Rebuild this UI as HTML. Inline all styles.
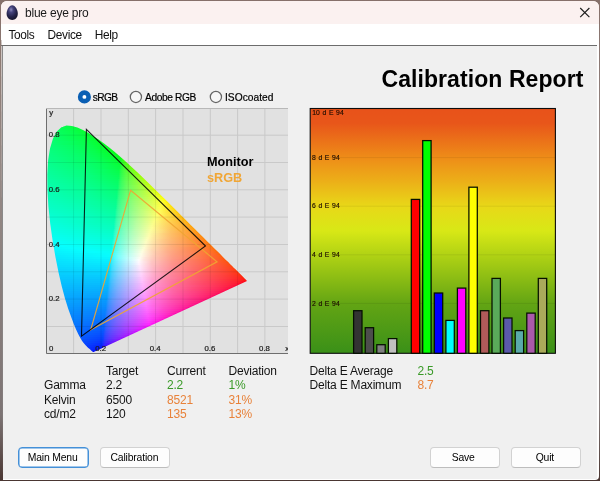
<!DOCTYPE html>
<html><head><meta charset="utf-8"><title>blue eye pro</title>
<style>
html,body{margin:0;padding:0;}
body{width:600px;height:481px;overflow:hidden;background:linear-gradient(180deg,#86706a 0%,#948683 30%,#857b7a 85%,#4a3632 100%);font-family:"Liberation Sans",sans-serif;position:relative;}
#win{position:absolute;left:1.3px;top:1.2px;width:597.5px;height:478.6px;background:#fff;border-radius:6px 6px 4px 2px;overflow:hidden;}
#title{position:absolute;left:0;top:0;width:100%;height:22.8px;background:#fbf1f0;}
#title .t{position:absolute;left:23.9px;top:5px;font-size:12px;letter-spacing:-0.22px;color:#1a1a1a;white-space:nowrap;}
#menu span{position:absolute;top:26.9px;font-size:11.9px;letter-spacing:-0.35px;color:#111;white-space:nowrap;}
#sep{position:absolute;left:0;top:43.4px;width:595.8px;height:1.6px;background:#6c6c6c;}
#client{position:absolute;left:0.6px;top:45px;width:595.6px;height:433px;background:#f0f0f0;border-left:1px solid #8a8a8a;box-sizing:border-box;}
.abs{position:absolute;white-space:nowrap;}
#txt{position:absolute;left:0;top:0;width:600px;height:481px;will-change:transform;}
#h1{right:16.5px;top:65.5px;font-size:23px;letter-spacing:0.08px;font-weight:bold;color:#000;line-height:26px;}
.rl{font-size:10.2px;color:#000;top:92.1px;line-height:12px;-webkit-text-stroke:0.2px #000;}
.tb{font-size:12px;letter-spacing:-0.2px;margin-left:-0.5px;color:#141414;line-height:14px;}
.gr{color:#3a9a28;}
.or{color:#e8823a;}
.btn{appearance:none;-webkit-appearance:none;margin:0;padding:0;font-family:inherit;display:block;position:absolute;top:447px;height:18.5px;border:1px solid #d2d2d2;border-bottom-color:#bdbdbd;border-radius:4px;background:#fdfdfd;font-size:10.4px;letter-spacing:-0.18px;color:#000;text-align:center;line-height:20px;box-sizing:content-box;text-indent:-1.2px;}
svg{position:absolute;left:0;top:0;will-change:transform;}
#title .t,#menu{will-change:transform;}
#title .t{width:200px;height:16px;}
#menu{position:absolute;left:0;top:0;width:300px;height:44px;}
svg text{font-family:"Liberation Sans",sans-serif;}
</style></head><body>
<div id="win">
<div id="title"><div class="t">blue eye pro</div></div>
<div id="menu"><span style="left:7.4px">Tools</span><span style="left:46.6px">Device</span><span style="left:93.7px">Help</span></div>
<div id="sep"></div>
<div id="client"></div>
</div>
<svg width="600" height="481" viewBox="0 0 600 481">
<defs>
<radialGradient id="egg" cx="0.4" cy="0.3" r="0.8"><stop offset="0" stop-color="#8e8cbc"/><stop offset="0.25" stop-color="#45437c"/><stop offset="0.6" stop-color="#25234a"/><stop offset="1" stop-color="#100f20"/></radialGradient>
<linearGradient id="bg" x1="0" x2="0" y1="0" y2="1">
<stop offset="0" stop-color="#e8521a"/><stop offset="0.06" stop-color="#e8561a"/><stop offset="0.2" stop-color="#ee8c18"/><stop offset="0.3" stop-color="#ecb018"/><stop offset="0.4" stop-color="#e8d818"/><stop offset="0.5" stop-color="#d8e816"/><stop offset="0.6" stop-color="#b0d214"/><stop offset="0.8" stop-color="#62a414"/><stop offset="1" stop-color="#3a9018"/>
</linearGradient>
<linearGradient id="wl" x1="0" x2="0" y1="0" y2="1"><stop offset="0" stop-color="#8c7870"/><stop offset="0.3" stop-color="#968a86"/><stop offset="0.85" stop-color="#7d7474"/><stop offset="1" stop-color="#4a3632"/></linearGradient>
<clipPath id="pc"><rect x="46" y="108" width="242" height="246"/></clipPath>
<clipPath id="lc"><path d="M93.6,352.1 L93.4,352.1 L93.0,352.0 L92.4,351.5 L91.1,350.4 L90.7,350.1 L90.2,349.6 L89.7,349.1 L89.0,348.6 L88.3,347.9 L87.5,347.2 L86.6,346.3 L85.6,345.3 L84.5,344.1 L83.2,342.5 L81.8,340.4 L80.1,337.6 L78.2,334.1 L76.2,329.7 L73.8,324.1 L71.2,317.1 L68.2,308.7 L65.0,298.5 L61.8,286.6 L58.6,272.8 L55.5,257.3 L52.6,240.6 L50.2,223.4 L48.4,206.3 L47.4,189.8 L47.3,174.4 L48.1,160.5 L50.0,148.4 L53.0,138.6 L56.8,131.5 L61.4,127.2 L66.5,125.5 L71.9,125.9 L77.4,127.6 L83.0,130.1 L88.5,133.1 L93.8,136.4 L98.9,139.8 L104.0,143.4 L108.9,147.2 L113.9,151.3 L118.8,155.4 L123.7,159.8 L128.6,164.2 L133.5,168.7 L138.4,173.3 L143.3,178.0 L148.2,182.7 L153.0,187.5 L157.9,192.3 L162.7,197.0 L167.6,201.8 L172.3,206.5 L177.1,211.2 L181.7,215.9 L186.3,220.4 L190.7,224.9 L195.1,229.2 L199.3,233.4 L203.4,237.5 L207.3,241.4 L211.0,245.0 L214.4,248.4 L217.6,251.6 L220.6,254.6 L223.4,257.4 L225.9,259.9 L228.2,262.1 L230.2,264.2 L232.1,266.0 L233.7,267.7 L235.2,269.1 L239.7,273.6 L242.7,276.6 L244.6,278.5 L245.7,279.6 L246.3,280.2 L246.6,280.5 L246.8,280.7 L247.0,280.9Z"/></clipPath>
<linearGradient id="g0" gradientUnits="userSpaceOnUse" x1="63" x2="75" y1="0" y2="0"><stop offset="0.000" stop-color="#00ff4b"/><stop offset="1.000" stop-color="#00ff38"/></linearGradient><linearGradient id="g1" gradientUnits="userSpaceOnUse" x1="58" x2="81" y1="0" y2="0"><stop offset="0.000" stop-color="#00ff55"/><stop offset="1.000" stop-color="#00ff30"/></linearGradient><linearGradient id="g2" gradientUnits="userSpaceOnUse" x1="56" x2="85" y1="0" y2="0"><stop offset="0.000" stop-color="#00ff5a"/><stop offset="0.586" stop-color="#00ff44"/><stop offset="1.000" stop-color="#00ff2c"/></linearGradient><linearGradient id="g3" gradientUnits="userSpaceOnUse" x1="54" x2="89" y1="0" y2="0"><stop offset="0.000" stop-color="#00ff5f"/><stop offset="0.571" stop-color="#00ff46"/><stop offset="1.000" stop-color="#00ff26"/></linearGradient><linearGradient id="g4" gradientUnits="userSpaceOnUse" x1="53" x2="92" y1="0" y2="0"><stop offset="0.000" stop-color="#00ff63"/><stop offset="0.615" stop-color="#00ff45"/><stop offset="1.000" stop-color="#00ff23"/></linearGradient><linearGradient id="g5" gradientUnits="userSpaceOnUse" x1="52" x2="96" y1="0" y2="0"><stop offset="0.000" stop-color="#00ff67"/><stop offset="0.659" stop-color="#00ff42"/><stop offset="0.886" stop-color="#00ff2d"/><stop offset="1.000" stop-color="#00ff1c"/></linearGradient><linearGradient id="g6" gradientUnits="userSpaceOnUse" x1="51" x2="99" y1="0" y2="0"><stop offset="0.000" stop-color="#00ff6a"/><stop offset="0.688" stop-color="#00ff41"/><stop offset="0.854" stop-color="#00ff30"/><stop offset="1.000" stop-color="#00ff18"/></linearGradient><linearGradient id="g7" gradientUnits="userSpaceOnUse" x1="50" x2="102" y1="0" y2="0"><stop offset="0.000" stop-color="#00ff6e"/><stop offset="0.654" stop-color="#00ff45"/><stop offset="0.865" stop-color="#00ff2e"/><stop offset="1.000" stop-color="#00ff13"/></linearGradient><linearGradient id="g8" gradientUnits="userSpaceOnUse" x1="49" x2="104" y1="0" y2="0"><stop offset="0.000" stop-color="#00ff71"/><stop offset="0.382" stop-color="#00ff5c"/><stop offset="0.709" stop-color="#00ff42"/><stop offset="0.855" stop-color="#00ff31"/><stop offset="1.000" stop-color="#00ff13"/></linearGradient><linearGradient id="g9" gradientUnits="userSpaceOnUse" x1="49" x2="107" y1="0" y2="0"><stop offset="0.000" stop-color="#00ff74"/><stop offset="0.672" stop-color="#00ff46"/><stop offset="0.897" stop-color="#00ff29"/><stop offset="1.000" stop-color="#00ff0b"/></linearGradient><linearGradient id="g10" gradientUnits="userSpaceOnUse" x1="48" x2="110" y1="0" y2="0"><stop offset="0.000" stop-color="#00ff77"/><stop offset="0.371" stop-color="#00ff61"/><stop offset="0.710" stop-color="#00ff43"/><stop offset="0.903" stop-color="#00ff26"/><stop offset="0.968" stop-color="#00ff14"/><stop offset="1.000" stop-color="#00ff00"/></linearGradient><linearGradient id="g11" gradientUnits="userSpaceOnUse" x1="48" x2="112" y1="0" y2="0"><stop offset="0.000" stop-color="#00ff7a"/><stop offset="0.359" stop-color="#00ff64"/><stop offset="0.688" stop-color="#00ff47"/><stop offset="0.922" stop-color="#00ff23"/><stop offset="0.969" stop-color="#00ff14"/><stop offset="1.000" stop-color="#00ff00"/></linearGradient><linearGradient id="g12" gradientUnits="userSpaceOnUse" x1="47" x2="115" y1="0" y2="0"><stop offset="0.000" stop-color="#00ff7d"/><stop offset="0.353" stop-color="#00ff67"/><stop offset="0.706" stop-color="#00ff46"/><stop offset="0.897" stop-color="#00ff27"/><stop offset="0.956" stop-color="#00ff15"/><stop offset="0.985" stop-color="#00ff00"/><stop offset="1.000" stop-color="#00ff00"/></linearGradient><linearGradient id="g13" gradientUnits="userSpaceOnUse" x1="47" x2="117" y1="0" y2="0"><stop offset="0.000" stop-color="#00ff7f"/><stop offset="0.314" stop-color="#00ff6c"/><stop offset="0.686" stop-color="#00ff4a"/><stop offset="0.900" stop-color="#00ff27"/><stop offset="0.957" stop-color="#00ff15"/><stop offset="0.986" stop-color="#00ff00"/><stop offset="1.000" stop-color="#00ff00"/></linearGradient><linearGradient id="g14" gradientUnits="userSpaceOnUse" x1="47" x2="120" y1="0" y2="0"><stop offset="0.000" stop-color="#00ff82"/><stop offset="0.425" stop-color="#00ff65"/><stop offset="0.699" stop-color="#00ff49"/><stop offset="0.877" stop-color="#00ff2b"/><stop offset="0.945" stop-color="#00ff15"/><stop offset="0.973" stop-color="#00ff00"/><stop offset="1.000" stop-color="#00ff00"/></linearGradient><linearGradient id="g15" gradientUnits="userSpaceOnUse" x1="46" x2="122" y1="0" y2="0"><stop offset="0.000" stop-color="#00ff85"/><stop offset="0.434" stop-color="#00ff67"/><stop offset="0.684" stop-color="#00ff4d"/><stop offset="0.895" stop-color="#00ff28"/><stop offset="0.947" stop-color="#00ff16"/><stop offset="0.974" stop-color="#00ff00"/><stop offset="0.987" stop-color="#00ff00"/><stop offset="1.000" stop-color="#1cff00"/></linearGradient><linearGradient id="g16" gradientUnits="userSpaceOnUse" x1="46" x2="124" y1="0" y2="0"><stop offset="0.000" stop-color="#00ff88"/><stop offset="0.436" stop-color="#00ff69"/><stop offset="0.667" stop-color="#00ff51"/><stop offset="0.859" stop-color="#00ff32"/><stop offset="0.949" stop-color="#00ff16"/><stop offset="0.962" stop-color="#06ff0e"/><stop offset="0.974" stop-color="#1fff00"/><stop offset="1.000" stop-color="#35ff00"/></linearGradient><linearGradient id="g17" gradientUnits="userSpaceOnUse" x1="46" x2="127" y1="0" y2="0"><stop offset="0.000" stop-color="#00ff8a"/><stop offset="0.580" stop-color="#00ff5c"/><stop offset="0.790" stop-color="#00ff3f"/><stop offset="0.914" stop-color="#00ff21"/><stop offset="0.951" stop-color="#2eff0f"/><stop offset="0.963" stop-color="#37ff00"/><stop offset="1.000" stop-color="#4dff00"/></linearGradient><linearGradient id="g18" gradientUnits="userSpaceOnUse" x1="46" x2="129" y1="0" y2="0"><stop offset="0.000" stop-color="#00ff8d"/><stop offset="0.614" stop-color="#00ff5a"/><stop offset="0.819" stop-color="#00ff3b"/><stop offset="0.892" stop-color="#00ff29"/><stop offset="0.916" stop-color="#25ff22"/><stop offset="0.928" stop-color="#30ff1d"/><stop offset="0.952" stop-color="#41ff0f"/><stop offset="0.964" stop-color="#48ff00"/><stop offset="1.000" stop-color="#5aff00"/></linearGradient><linearGradient id="g19" gradientUnits="userSpaceOnUse" x1="45" x2="131" y1="0" y2="0"><stop offset="0.000" stop-color="#00ff90"/><stop offset="0.558" stop-color="#00ff63"/><stop offset="0.721" stop-color="#00ff4e"/><stop offset="0.872" stop-color="#00ff30"/><stop offset="0.884" stop-color="#18ff2d"/><stop offset="0.907" stop-color="#32ff26"/><stop offset="0.942" stop-color="#49ff18"/><stop offset="0.965" stop-color="#56ff00"/><stop offset="1.000" stop-color="#66ff00"/></linearGradient><linearGradient id="g20" gradientUnits="userSpaceOnUse" x1="45" x2="133" y1="0" y2="0"><stop offset="0.000" stop-color="#00ff92"/><stop offset="0.511" stop-color="#00ff6a"/><stop offset="0.705" stop-color="#00ff52"/><stop offset="0.852" stop-color="#00ff37"/><stop offset="0.864" stop-color="#1cff34"/><stop offset="0.898" stop-color="#3dff2a"/><stop offset="0.943" stop-color="#57ff18"/><stop offset="0.966" stop-color="#62ff00"/><stop offset="1.000" stop-color="#71ff00"/></linearGradient><linearGradient id="g21" gradientUnits="userSpaceOnUse" x1="45" x2="135" y1="0" y2="0"><stop offset="0.000" stop-color="#00ff95"/><stop offset="0.511" stop-color="#00ff6c"/><stop offset="0.822" stop-color="#00ff3f"/><stop offset="0.833" stop-color="#05ff3c"/><stop offset="0.844" stop-color="#1fff3a"/><stop offset="0.878" stop-color="#3fff31"/><stop offset="0.944" stop-color="#64ff18"/><stop offset="0.956" stop-color="#69ff11"/><stop offset="0.967" stop-color="#6eff00"/><stop offset="1.000" stop-color="#7bff00"/></linearGradient><linearGradient id="g22" gradientUnits="userSpaceOnUse" x1="45" x2="137" y1="0" y2="0"><stop offset="0.000" stop-color="#00ff97"/><stop offset="0.435" stop-color="#00ff76"/><stop offset="0.630" stop-color="#00ff60"/><stop offset="0.804" stop-color="#00ff44"/><stop offset="0.826" stop-color="#23ff3f"/><stop offset="0.859" stop-color="#41ff38"/><stop offset="0.935" stop-color="#6aff1f"/><stop offset="0.957" stop-color="#74ff11"/><stop offset="0.967" stop-color="#78ff00"/><stop offset="1.000" stop-color="#85ff00"/></linearGradient><linearGradient id="g23" gradientUnits="userSpaceOnUse" x1="45" x2="139" y1="0" y2="0"><stop offset="0.000" stop-color="#00ff9a"/><stop offset="0.436" stop-color="#00ff78"/><stop offset="0.787" stop-color="#00ff49"/><stop offset="0.809" stop-color="#25ff45"/><stop offset="0.851" stop-color="#4aff3b"/><stop offset="0.936" stop-color="#75ff1f"/><stop offset="0.957" stop-color="#7eff12"/><stop offset="0.968" stop-color="#82ff00"/><stop offset="1.000" stop-color="#8eff00"/></linearGradient><linearGradient id="g24" gradientUnits="userSpaceOnUse" x1="45" x2="142" y1="0" y2="0"><stop offset="0.000" stop-color="#00ff9c"/><stop offset="0.443" stop-color="#00ff79"/><stop offset="0.763" stop-color="#00ff4d"/><stop offset="0.773" stop-color="#19ff4c"/><stop offset="0.784" stop-color="#28ff4a"/><stop offset="0.835" stop-color="#52ff3e"/><stop offset="0.928" stop-color="#80ff20"/><stop offset="0.948" stop-color="#88ff12"/><stop offset="0.959" stop-color="#8cff03"/><stop offset="1.000" stop-color="#9bff00"/></linearGradient><linearGradient id="g25" gradientUnits="userSpaceOnUse" x1="45" x2="144" y1="0" y2="0"><stop offset="0.000" stop-color="#00ff9f"/><stop offset="0.465" stop-color="#00ff79"/><stop offset="0.747" stop-color="#00ff52"/><stop offset="0.758" stop-color="#1dff50"/><stop offset="0.768" stop-color="#2bff4e"/><stop offset="0.818" stop-color="#54ff44"/><stop offset="0.919" stop-color="#86ff25"/><stop offset="0.949" stop-color="#92ff13"/><stop offset="0.960" stop-color="#95ff04"/><stop offset="0.970" stop-color="#99ff00"/><stop offset="1.000" stop-color="#a4ff00"/></linearGradient><linearGradient id="g26" gradientUnits="userSpaceOnUse" x1="45" x2="146" y1="0" y2="0"><stop offset="0.000" stop-color="#00ffa1"/><stop offset="0.356" stop-color="#00ff86"/><stop offset="0.723" stop-color="#00ff58"/><stop offset="0.733" stop-color="#03ff56"/><stop offset="0.743" stop-color="#20ff55"/><stop offset="0.762" stop-color="#38ff51"/><stop offset="0.802" stop-color="#56ff49"/><stop offset="0.911" stop-color="#8bff2a"/><stop offset="0.941" stop-color="#97ff1b"/><stop offset="0.970" stop-color="#a2ff00"/><stop offset="1.000" stop-color="#adff00"/></linearGradient><linearGradient id="g27" gradientUnits="userSpaceOnUse" x1="45" x2="148" y1="0" y2="0"><stop offset="0.000" stop-color="#00ffa4"/><stop offset="0.359" stop-color="#00ff88"/><stop offset="0.709" stop-color="#00ff5c"/><stop offset="0.738" stop-color="#30ff57"/><stop offset="0.777" stop-color="#51ff50"/><stop offset="0.893" stop-color="#8dff32"/><stop offset="0.942" stop-color="#a0ff1b"/><stop offset="0.971" stop-color="#abff00"/><stop offset="1.000" stop-color="#b6ff00"/></linearGradient><linearGradient id="g28" gradientUnits="userSpaceOnUse" x1="45" x2="150" y1="0" y2="0"><stop offset="0.000" stop-color="#00ffa6"/><stop offset="0.352" stop-color="#00ff8b"/><stop offset="0.695" stop-color="#00ff61"/><stop offset="0.714" stop-color="#26ff5d"/><stop offset="0.724" stop-color="#32ff5c"/><stop offset="0.752" stop-color="#4cff56"/><stop offset="0.790" stop-color="#65ff4f"/><stop offset="0.905" stop-color="#9bff2f"/><stop offset="0.943" stop-color="#aaff1c"/><stop offset="0.971" stop-color="#b4ff00"/><stop offset="1.000" stop-color="#beff00"/></linearGradient><linearGradient id="g29" gradientUnits="userSpaceOnUse" x1="45" x2="152" y1="0" y2="0"><stop offset="0.000" stop-color="#00ffa9"/><stop offset="0.346" stop-color="#00ff8e"/><stop offset="0.682" stop-color="#00ff65"/><stop offset="0.692" stop-color="#19ff63"/><stop offset="0.710" stop-color="#35ff60"/><stop offset="0.766" stop-color="#61ff55"/><stop offset="0.897" stop-color="#a0ff33"/><stop offset="0.944" stop-color="#b2ff1c"/><stop offset="0.972" stop-color="#bdff00"/><stop offset="1.000" stop-color="#c7ff00"/></linearGradient><linearGradient id="g30" gradientUnits="userSpaceOnUse" x1="45" x2="154" y1="0" y2="0"><stop offset="0.000" stop-color="#00ffab"/><stop offset="0.339" stop-color="#00ff91"/><stop offset="0.670" stop-color="#00ff69"/><stop offset="0.679" stop-color="#1dff67"/><stop offset="0.688" stop-color="#2cff66"/><stop offset="0.743" stop-color="#5dff5c"/><stop offset="0.807" stop-color="#81ff4e"/><stop offset="0.899" stop-color="#aaff34"/><stop offset="0.945" stop-color="#bbff1d"/><stop offset="0.972" stop-color="#c6ff00"/><stop offset="1.000" stop-color="#cfff00"/></linearGradient><linearGradient id="g31" gradientUnits="userSpaceOnUse" x1="45" x2="156" y1="0" y2="0"><stop offset="0.000" stop-color="#00ffae"/><stop offset="0.414" stop-color="#00ff8c"/><stop offset="0.658" stop-color="#00ff6d"/><stop offset="0.667" stop-color="#21ff6b"/><stop offset="0.676" stop-color="#2fff6a"/><stop offset="0.703" stop-color="#4aff65"/><stop offset="0.748" stop-color="#6aff5d"/><stop offset="0.892" stop-color="#afff38"/><stop offset="0.946" stop-color="#c4ff1e"/><stop offset="0.973" stop-color="#ceff00"/><stop offset="1.000" stop-color="#d8ff00"/></linearGradient><linearGradient id="g32" gradientUnits="userSpaceOnUse" x1="45" x2="158" y1="0" y2="0"><stop offset="0.000" stop-color="#00ffb0"/><stop offset="0.389" stop-color="#00ff91"/><stop offset="0.637" stop-color="#00ff72"/><stop offset="0.655" stop-color="#24ff6f"/><stop offset="0.673" stop-color="#3cff6c"/><stop offset="0.735" stop-color="#6cff61"/><stop offset="0.885" stop-color="#b5ff3c"/><stop offset="0.938" stop-color="#caff24"/><stop offset="0.956" stop-color="#d0ff17"/><stop offset="0.973" stop-color="#d7ff00"/><stop offset="1.000" stop-color="#e1ff00"/></linearGradient><linearGradient id="g33" gradientUnits="userSpaceOnUse" x1="45" x2="160" y1="0" y2="0"><stop offset="0.000" stop-color="#00ffb3"/><stop offset="0.374" stop-color="#00ff95"/><stop offset="0.626" stop-color="#00ff76"/><stop offset="0.643" stop-color="#27ff73"/><stop offset="0.661" stop-color="#3eff70"/><stop offset="0.730" stop-color="#73ff64"/><stop offset="0.826" stop-color="#a4ff4f"/><stop offset="0.904" stop-color="#c5ff36"/><stop offset="0.948" stop-color="#d6ff1f"/><stop offset="0.974" stop-color="#e0ff00"/><stop offset="1.000" stop-color="#e9ff00"/></linearGradient><linearGradient id="g34" gradientUnits="userSpaceOnUse" x1="45" x2="162" y1="0" y2="0"><stop offset="0.000" stop-color="#00ffb6"/><stop offset="0.359" stop-color="#00ff99"/><stop offset="0.615" stop-color="#00ff7a"/><stop offset="0.624" stop-color="#1aff78"/><stop offset="0.641" stop-color="#36ff76"/><stop offset="0.701" stop-color="#6aff6c"/><stop offset="0.795" stop-color="#9eff58"/><stop offset="0.897" stop-color="#caff3a"/><stop offset="0.949" stop-color="#dfff1f"/><stop offset="0.974" stop-color="#e8ff00"/><stop offset="1.000" stop-color="#f2ff00"/></linearGradient><linearGradient id="g35" gradientUnits="userSpaceOnUse" x1="45" x2="164" y1="0" y2="0"><stop offset="0.000" stop-color="#00ffb8"/><stop offset="0.353" stop-color="#00ff9c"/><stop offset="0.605" stop-color="#00ff7d"/><stop offset="0.613" stop-color="#1eff7c"/><stop offset="0.630" stop-color="#39ff7a"/><stop offset="0.697" stop-color="#71ff6e"/><stop offset="0.782" stop-color="#a0ff5d"/><stop offset="0.899" stop-color="#d4ff3b"/><stop offset="0.950" stop-color="#e8ff20"/><stop offset="0.975" stop-color="#f1ff00"/><stop offset="1.000" stop-color="#fbff00"/></linearGradient><linearGradient id="g36" gradientUnits="userSpaceOnUse" x1="45" x2="166" y1="0" y2="0"><stop offset="0.000" stop-color="#00ffbb"/><stop offset="0.339" stop-color="#00ffa0"/><stop offset="0.595" stop-color="#00ff81"/><stop offset="0.603" stop-color="#22ff80"/><stop offset="0.620" stop-color="#3bff7d"/><stop offset="0.686" stop-color="#73ff72"/><stop offset="0.769" stop-color="#a2ff62"/><stop offset="0.868" stop-color="#cfff48"/><stop offset="0.950" stop-color="#f1ff21"/><stop offset="0.975" stop-color="#faff00"/><stop offset="1.000" stop-color="#fffa00"/></linearGradient><linearGradient id="g37" gradientUnits="userSpaceOnUse" x1="46" x2="168" y1="0" y2="0"><stop offset="0.000" stop-color="#00ffbd"/><stop offset="0.320" stop-color="#00ffa4"/><stop offset="0.574" stop-color="#00ff86"/><stop offset="0.582" stop-color="#0eff85"/><stop offset="0.590" stop-color="#25ff84"/><stop offset="0.615" stop-color="#47ff80"/><stop offset="0.672" stop-color="#75ff77"/><stop offset="0.713" stop-color="#8eff6f"/><stop offset="0.803" stop-color="#bbff5c"/><stop offset="0.893" stop-color="#e2ff40"/><stop offset="0.951" stop-color="#faff21"/><stop offset="0.975" stop-color="#fffb00"/><stop offset="1.000" stop-color="#fff200"/></linearGradient><linearGradient id="g38" gradientUnits="userSpaceOnUse" x1="46" x2="170" y1="0" y2="0"><stop offset="0.000" stop-color="#00ffc0"/><stop offset="0.347" stop-color="#00ffa4"/><stop offset="0.565" stop-color="#00ff8a"/><stop offset="0.581" stop-color="#29ff88"/><stop offset="0.605" stop-color="#49ff84"/><stop offset="0.661" stop-color="#77ff7b"/><stop offset="0.702" stop-color="#90ff74"/><stop offset="0.815" stop-color="#c9ff5b"/><stop offset="0.895" stop-color="#ecff41"/><stop offset="0.944" stop-color="#fffe28"/><stop offset="0.960" stop-color="#fff81a"/><stop offset="0.976" stop-color="#fff200"/><stop offset="1.000" stop-color="#ffea00"/></linearGradient><linearGradient id="g39" gradientUnits="userSpaceOnUse" x1="46" x2="172" y1="0" y2="0"><stop offset="0.000" stop-color="#00ffc2"/><stop offset="0.270" stop-color="#00ffae"/><stop offset="0.556" stop-color="#00ff8e"/><stop offset="0.571" stop-color="#2cff8b"/><stop offset="0.595" stop-color="#4bff88"/><stop offset="0.651" stop-color="#79ff7f"/><stop offset="0.690" stop-color="#92ff78"/><stop offset="0.825" stop-color="#d6ff5a"/><stop offset="0.921" stop-color="#ffff37"/><stop offset="0.960" stop-color="#fff01a"/><stop offset="0.976" stop-color="#ffea00"/><stop offset="1.000" stop-color="#ffe200"/></linearGradient><linearGradient id="g40" gradientUnits="userSpaceOnUse" x1="46" x2="174" y1="0" y2="0"><stop offset="0.000" stop-color="#00ffc5"/><stop offset="0.289" stop-color="#00ffaf"/><stop offset="0.547" stop-color="#00ff91"/><stop offset="0.555" stop-color="#1fff90"/><stop offset="0.562" stop-color="#2fff8f"/><stop offset="0.586" stop-color="#4dff8c"/><stop offset="0.641" stop-color="#7bff83"/><stop offset="0.695" stop-color="#9dff79"/><stop offset="0.828" stop-color="#dfff5b"/><stop offset="0.898" stop-color="#feff42"/><stop offset="0.953" stop-color="#ffea20"/><stop offset="0.969" stop-color="#ffe510"/><stop offset="0.977" stop-color="#ffe200"/><stop offset="1.000" stop-color="#ffdb00"/></linearGradient><linearGradient id="g41" gradientUnits="userSpaceOnUse" x1="46" x2="176" y1="0" y2="0"><stop offset="0.000" stop-color="#00ffc8"/><stop offset="0.308" stop-color="#00ffb0"/><stop offset="0.538" stop-color="#00ff95"/><stop offset="0.546" stop-color="#23ff94"/><stop offset="0.569" stop-color="#47ff91"/><stop offset="0.623" stop-color="#77ff89"/><stop offset="0.700" stop-color="#a8ff7b"/><stop offset="0.877" stop-color="#feff4d"/><stop offset="0.946" stop-color="#ffe526"/><stop offset="0.969" stop-color="#ffdd10"/><stop offset="0.977" stop-color="#ffdb00"/><stop offset="1.000" stop-color="#ffd400"/></linearGradient><linearGradient id="g42" gradientUnits="userSpaceOnUse" x1="46" x2="178" y1="0" y2="0"><stop offset="0.000" stop-color="#00ffcb"/><stop offset="0.295" stop-color="#00ffb4"/><stop offset="0.523" stop-color="#00ff9a"/><stop offset="0.545" stop-color="#34ff97"/><stop offset="0.576" stop-color="#59ff93"/><stop offset="0.621" stop-color="#7fff8b"/><stop offset="0.727" stop-color="#bfff78"/><stop offset="0.864" stop-color="#fffd53"/><stop offset="0.955" stop-color="#ffdb20"/><stop offset="0.970" stop-color="#ffd610"/><stop offset="0.977" stop-color="#ffd400"/><stop offset="1.000" stop-color="#ffcd00"/></linearGradient><linearGradient id="g43" gradientUnits="userSpaceOnUse" x1="47" x2="180" y1="0" y2="0"><stop offset="0.000" stop-color="#00ffcd"/><stop offset="0.278" stop-color="#00ffb8"/><stop offset="0.511" stop-color="#00ff9e"/><stop offset="0.526" stop-color="#2aff9c"/><stop offset="0.534" stop-color="#37ff9b"/><stop offset="0.579" stop-color="#69ff94"/><stop offset="0.647" stop-color="#9aff89"/><stop offset="0.744" stop-color="#d1ff76"/><stop offset="0.842" stop-color="#fffe5c"/><stop offset="0.947" stop-color="#ffd625"/><stop offset="0.970" stop-color="#ffcf10"/><stop offset="0.977" stop-color="#ffcd00"/><stop offset="1.000" stop-color="#ffc700"/></linearGradient><linearGradient id="g44" gradientUnits="userSpaceOnUse" x1="47" x2="182" y1="0" y2="0"><stop offset="0.000" stop-color="#00ffd0"/><stop offset="0.267" stop-color="#00ffbc"/><stop offset="0.504" stop-color="#00ffa2"/><stop offset="0.511" stop-color="#1bffa1"/><stop offset="0.526" stop-color="#3aff9f"/><stop offset="0.570" stop-color="#6bff98"/><stop offset="0.644" stop-color="#a1ff8c"/><stop offset="0.756" stop-color="#dfff76"/><stop offset="0.822" stop-color="#ffff64"/><stop offset="0.933" stop-color="#ffd42e"/><stop offset="0.963" stop-color="#ffcb19"/><stop offset="0.978" stop-color="#ffc700"/><stop offset="1.000" stop-color="#ffc100"/></linearGradient><linearGradient id="g45" gradientUnits="userSpaceOnUse" x1="47" x2="184" y1="0" y2="0"><stop offset="0.000" stop-color="#00ffd3"/><stop offset="0.255" stop-color="#00ffc0"/><stop offset="0.496" stop-color="#00ffa6"/><stop offset="0.504" stop-color="#20ffa5"/><stop offset="0.518" stop-color="#3dffa3"/><stop offset="0.555" stop-color="#67ff9d"/><stop offset="0.635" stop-color="#a3ff91"/><stop offset="0.766" stop-color="#edff76"/><stop offset="0.803" stop-color="#ffff6c"/><stop offset="0.934" stop-color="#ffcd2d"/><stop offset="0.964" stop-color="#ffc418"/><stop offset="0.978" stop-color="#ffc000"/><stop offset="1.000" stop-color="#ffbb00"/></linearGradient><linearGradient id="g46" gradientUnits="userSpaceOnUse" x1="47" x2="186" y1="0" y2="0"><stop offset="0.000" stop-color="#00ffd6"/><stop offset="0.245" stop-color="#00ffc4"/><stop offset="0.489" stop-color="#00ffa9"/><stop offset="0.496" stop-color="#24ffa8"/><stop offset="0.511" stop-color="#3fffa7"/><stop offset="0.561" stop-color="#76ff9f"/><stop offset="0.662" stop-color="#bcff8f"/><stop offset="0.777" stop-color="#fbff76"/><stop offset="0.942" stop-color="#ffc428"/><stop offset="0.964" stop-color="#ffbe18"/><stop offset="0.978" stop-color="#ffba00"/><stop offset="1.000" stop-color="#ffb500"/></linearGradient><linearGradient id="g47" gradientUnits="userSpaceOnUse" x1="47" x2="188" y1="0" y2="0"><stop offset="0.000" stop-color="#00ffd9"/><stop offset="0.255" stop-color="#00ffc6"/><stop offset="0.475" stop-color="#00ffae"/><stop offset="0.482" stop-color="#0effad"/><stop offset="0.489" stop-color="#28ffac"/><stop offset="0.504" stop-color="#42ffab"/><stop offset="0.553" stop-color="#78ffa4"/><stop offset="0.645" stop-color="#baff95"/><stop offset="0.766" stop-color="#feff7b"/><stop offset="0.844" stop-color="#ffdd57"/><stop offset="0.936" stop-color="#ffc02c"/><stop offset="0.965" stop-color="#ffb818"/><stop offset="0.979" stop-color="#ffb400"/><stop offset="1.000" stop-color="#ffaf00"/></linearGradient><linearGradient id="g48" gradientUnits="userSpaceOnUse" x1="48" x2="190" y1="0" y2="0"><stop offset="0.000" stop-color="#00ffdc"/><stop offset="0.465" stop-color="#00ffb2"/><stop offset="0.479" stop-color="#2bffb0"/><stop offset="0.486" stop-color="#39ffb0"/><stop offset="0.507" stop-color="#57ffad"/><stop offset="0.535" stop-color="#74ffa9"/><stop offset="0.613" stop-color="#afff9d"/><stop offset="0.746" stop-color="#fdff82"/><stop offset="0.838" stop-color="#ffd859"/><stop offset="0.930" stop-color="#ffbb2f"/><stop offset="0.965" stop-color="#ffb218"/><stop offset="0.972" stop-color="#ffb011"/><stop offset="0.979" stop-color="#ffaf00"/><stop offset="1.000" stop-color="#ffaa00"/></linearGradient><linearGradient id="g49" gradientUnits="userSpaceOnUse" x1="48" x2="192" y1="0" y2="0"><stop offset="0.000" stop-color="#00ffdf"/><stop offset="0.458" stop-color="#00ffb6"/><stop offset="0.465" stop-color="#1cffb5"/><stop offset="0.479" stop-color="#3cffb4"/><stop offset="0.493" stop-color="#51ffb2"/><stop offset="0.528" stop-color="#76ffad"/><stop offset="0.611" stop-color="#b6ffa0"/><stop offset="0.729" stop-color="#fcff89"/><stop offset="0.819" stop-color="#ffd860"/><stop offset="0.924" stop-color="#ffb732"/><stop offset="0.965" stop-color="#ffad18"/><stop offset="0.972" stop-color="#ffab11"/><stop offset="0.979" stop-color="#ffa900"/><stop offset="1.000" stop-color="#ffa500"/></linearGradient><linearGradient id="g50" gradientUnits="userSpaceOnUse" x1="48" x2="194" y1="0" y2="0"><stop offset="0.000" stop-color="#00ffe2"/><stop offset="0.452" stop-color="#00ffba"/><stop offset="0.459" stop-color="#21ffb9"/><stop offset="0.473" stop-color="#3fffb8"/><stop offset="0.514" stop-color="#72ffb2"/><stop offset="0.589" stop-color="#afffa7"/><stop offset="0.712" stop-color="#fcff90"/><stop offset="0.808" stop-color="#ffd564"/><stop offset="0.932" stop-color="#ffaf2e"/><stop offset="0.966" stop-color="#ffa718"/><stop offset="0.979" stop-color="#ffa403"/><stop offset="1.000" stop-color="#ff9f00"/></linearGradient><linearGradient id="g51" gradientUnits="userSpaceOnUse" x1="48" x2="196" y1="0" y2="0"><stop offset="0.000" stop-color="#00ffe5"/><stop offset="0.446" stop-color="#00ffbe"/><stop offset="0.453" stop-color="#25ffbd"/><stop offset="0.466" stop-color="#42ffbc"/><stop offset="0.507" stop-color="#74ffb7"/><stop offset="0.595" stop-color="#bbffa9"/><stop offset="0.703" stop-color="#ffff95"/><stop offset="0.764" stop-color="#ffe077"/><stop offset="0.838" stop-color="#ffc456"/><stop offset="0.946" stop-color="#ffa626"/><stop offset="0.966" stop-color="#ffa218"/><stop offset="0.980" stop-color="#ff9f04"/><stop offset="1.000" stop-color="#ff9a00"/></linearGradient><linearGradient id="g52" gradientUnits="userSpaceOnUse" x1="49" x2="198" y1="0" y2="0"><stop offset="0.000" stop-color="#00ffe8"/><stop offset="0.430" stop-color="#00ffc3"/><stop offset="0.436" stop-color="#0effc2"/><stop offset="0.443" stop-color="#29ffc2"/><stop offset="0.456" stop-color="#44ffc0"/><stop offset="0.503" stop-color="#7dffba"/><stop offset="0.577" stop-color="#b9ffaf"/><stop offset="0.685" stop-color="#feff9c"/><stop offset="0.812" stop-color="#ffc660"/><stop offset="0.926" stop-color="#ffa630"/><stop offset="0.960" stop-color="#ff9e1d"/><stop offset="0.987" stop-color="#ff9800"/><stop offset="1.000" stop-color="#ff9500"/></linearGradient><linearGradient id="g53" gradientUnits="userSpaceOnUse" x1="49" x2="200" y1="0" y2="0"><stop offset="0.000" stop-color="#00ffeb"/><stop offset="0.424" stop-color="#00ffc7"/><stop offset="0.437" stop-color="#2dffc6"/><stop offset="0.444" stop-color="#3bffc5"/><stop offset="0.470" stop-color="#63ffc2"/><stop offset="0.490" stop-color="#79ffbf"/><stop offset="0.556" stop-color="#b2ffb6"/><stop offset="0.669" stop-color="#fdffa2"/><stop offset="0.808" stop-color="#ffc161"/><stop offset="0.934" stop-color="#ff9f2c"/><stop offset="0.967" stop-color="#ff9717"/><stop offset="0.987" stop-color="#ff9300"/><stop offset="1.000" stop-color="#ff9000"/></linearGradient><linearGradient id="g54" gradientUnits="userSpaceOnUse" x1="49" x2="202" y1="0" y2="0"><stop offset="0.000" stop-color="#00ffee"/><stop offset="0.418" stop-color="#00ffcc"/><stop offset="0.425" stop-color="#1cffcb"/><stop offset="0.438" stop-color="#3effc9"/><stop offset="0.471" stop-color="#6dffc5"/><stop offset="0.529" stop-color="#a5ffbd"/><stop offset="0.654" stop-color="#fdffa9"/><stop offset="0.745" stop-color="#ffd27b"/><stop offset="0.810" stop-color="#ffba5f"/><stop offset="0.928" stop-color="#ff9b2f"/><stop offset="0.967" stop-color="#ff9217"/><stop offset="0.987" stop-color="#ff8e00"/><stop offset="1.000" stop-color="#ff8c00"/></linearGradient><linearGradient id="g55" gradientUnits="userSpaceOnUse" x1="49" x2="204" y1="0" y2="0"><stop offset="0.000" stop-color="#00fff2"/><stop offset="0.413" stop-color="#00ffd0"/><stop offset="0.419" stop-color="#22ffcf"/><stop offset="0.426" stop-color="#34ffcf"/><stop offset="0.445" stop-color="#57ffcc"/><stop offset="0.471" stop-color="#77ffc9"/><stop offset="0.529" stop-color="#adffc1"/><stop offset="0.645" stop-color="#fffead"/><stop offset="0.684" stop-color="#ffe797"/><stop offset="0.781" stop-color="#ffbe6a"/><stop offset="0.942" stop-color="#ff9328"/><stop offset="0.968" stop-color="#ff8d17"/><stop offset="0.987" stop-color="#ff8900"/><stop offset="1.000" stop-color="#ff8700"/></linearGradient><linearGradient id="g56" gradientUnits="userSpaceOnUse" x1="50" x2="206" y1="0" y2="0"><stop offset="0.000" stop-color="#00fff5"/><stop offset="0.404" stop-color="#00ffd4"/><stop offset="0.410" stop-color="#26ffd4"/><stop offset="0.417" stop-color="#37ffd3"/><stop offset="0.436" stop-color="#59ffd1"/><stop offset="0.455" stop-color="#72ffce"/><stop offset="0.526" stop-color="#b5ffc5"/><stop offset="0.628" stop-color="#ffffb4"/><stop offset="0.667" stop-color="#ffe79d"/><stop offset="0.776" stop-color="#ffb96b"/><stop offset="0.929" stop-color="#ff902e"/><stop offset="0.968" stop-color="#ff8817"/><stop offset="0.987" stop-color="#ff8500"/><stop offset="1.000" stop-color="#ff8200"/></linearGradient><linearGradient id="g57" gradientUnits="userSpaceOnUse" x1="50" x2="208" y1="0" y2="0"><stop offset="0.000" stop-color="#00fff8"/><stop offset="0.392" stop-color="#00ffda"/><stop offset="0.399" stop-color="#0effd9"/><stop offset="0.405" stop-color="#2bffd8"/><stop offset="0.411" stop-color="#3bffd7"/><stop offset="0.430" stop-color="#5cffd5"/><stop offset="0.456" stop-color="#7cffd2"/><stop offset="0.525" stop-color="#bdffc9"/><stop offset="0.614" stop-color="#ffffbb"/><stop offset="0.677" stop-color="#ffda96"/><stop offset="0.747" stop-color="#ffbd76"/><stop offset="0.911" stop-color="#ff8f36"/><stop offset="0.962" stop-color="#ff851c"/><stop offset="0.987" stop-color="#ff8000"/><stop offset="1.000" stop-color="#ff7e00"/></linearGradient><linearGradient id="g58" gradientUnits="userSpaceOnUse" x1="50" x2="210" y1="0" y2="0"><stop offset="0.000" stop-color="#00fffc"/><stop offset="0.388" stop-color="#00ffde"/><stop offset="0.400" stop-color="#2fffdd"/><stop offset="0.406" stop-color="#3effdc"/><stop offset="0.425" stop-color="#5fffda"/><stop offset="0.444" stop-color="#77ffd8"/><stop offset="0.500" stop-color="#b0ffd1"/><stop offset="0.600" stop-color="#feffc2"/><stop offset="0.662" stop-color="#ffda9c"/><stop offset="0.744" stop-color="#ffb876"/><stop offset="0.931" stop-color="#ff862d"/><stop offset="0.969" stop-color="#ff7f17"/><stop offset="0.988" stop-color="#ff7b00"/><stop offset="1.000" stop-color="#ff7900"/></linearGradient><linearGradient id="g59" gradientUnits="userSpaceOnUse" x1="51" x2="212" y1="0" y2="0"><stop offset="0.000" stop-color="#00ffff"/><stop offset="0.379" stop-color="#00ffe3"/><stop offset="0.385" stop-color="#1dffe2"/><stop offset="0.398" stop-color="#41ffe1"/><stop offset="0.435" stop-color="#7affdd"/><stop offset="0.509" stop-color="#c3ffd3"/><stop offset="0.590" stop-color="#fffcc5"/><stop offset="0.646" stop-color="#ffdaa2"/><stop offset="0.739" stop-color="#ffb377"/><stop offset="0.919" stop-color="#ff8432"/><stop offset="0.969" stop-color="#ff7a17"/><stop offset="0.988" stop-color="#ff7700"/><stop offset="1.000" stop-color="#ff7500"/></linearGradient><linearGradient id="g60" gradientUnits="userSpaceOnUse" x1="51" x2="214" y1="0" y2="0"><stop offset="0.000" stop-color="#00fbff"/><stop offset="0.074" stop-color="#00ffff"/><stop offset="0.374" stop-color="#00ffe7"/><stop offset="0.380" stop-color="#23ffe7"/><stop offset="0.387" stop-color="#36ffe6"/><stop offset="0.405" stop-color="#5bffe4"/><stop offset="0.423" stop-color="#75ffe2"/><stop offset="0.485" stop-color="#b6ffdb"/><stop offset="0.577" stop-color="#fffdcc"/><stop offset="0.632" stop-color="#ffdaa8"/><stop offset="0.736" stop-color="#ffae77"/><stop offset="0.933" stop-color="#ff7d2c"/><stop offset="0.969" stop-color="#ff7617"/><stop offset="0.988" stop-color="#ff7200"/><stop offset="1.000" stop-color="#ff7000"/></linearGradient><linearGradient id="g61" gradientUnits="userSpaceOnUse" x1="51" x2="216" y1="0" y2="0"><stop offset="0.000" stop-color="#00f8ff"/><stop offset="0.133" stop-color="#00ffff"/><stop offset="0.370" stop-color="#00ffec"/><stop offset="0.376" stop-color="#28ffec"/><stop offset="0.382" stop-color="#3affeb"/><stop offset="0.394" stop-color="#53ffea"/><stop offset="0.418" stop-color="#78ffe7"/><stop offset="0.479" stop-color="#b9ffe0"/><stop offset="0.564" stop-color="#fffed4"/><stop offset="0.618" stop-color="#ffdaae"/><stop offset="0.703" stop-color="#ffb484"/><stop offset="0.806" stop-color="#ff945c"/><stop offset="0.921" stop-color="#ff7a31"/><stop offset="0.970" stop-color="#ff7117"/><stop offset="0.988" stop-color="#ff6e00"/><stop offset="1.000" stop-color="#ff6c00"/></linearGradient><linearGradient id="g62" gradientUnits="userSpaceOnUse" x1="52" x2="218" y1="0" y2="0"><stop offset="0.000" stop-color="#00f5ff"/><stop offset="0.193" stop-color="#00ffff"/><stop offset="0.355" stop-color="#00fff2"/><stop offset="0.361" stop-color="#0efff1"/><stop offset="0.367" stop-color="#2cfff0"/><stop offset="0.380" stop-color="#4bffef"/><stop offset="0.416" stop-color="#82ffec"/><stop offset="0.470" stop-color="#bcffe6"/><stop offset="0.548" stop-color="#ffffdb"/><stop offset="0.602" stop-color="#ffdab4"/><stop offset="0.693" stop-color="#ffb187"/><stop offset="0.789" stop-color="#ff9361"/><stop offset="0.928" stop-color="#ff742e"/><stop offset="0.970" stop-color="#ff6c17"/><stop offset="0.988" stop-color="#ff6900"/><stop offset="1.000" stop-color="#ff6700"/></linearGradient><linearGradient id="g63" gradientUnits="userSpaceOnUse" x1="52" x2="220" y1="0" y2="0"><stop offset="0.000" stop-color="#00f1ff"/><stop offset="0.250" stop-color="#00ffff"/><stop offset="0.351" stop-color="#00fff7"/><stop offset="0.363" stop-color="#31fff5"/><stop offset="0.369" stop-color="#41fff5"/><stop offset="0.393" stop-color="#6dfff3"/><stop offset="0.435" stop-color="#a1ffee"/><stop offset="0.536" stop-color="#ffffe2"/><stop offset="0.607" stop-color="#ffd0b0"/><stop offset="0.690" stop-color="#ffac87"/><stop offset="0.774" stop-color="#ff9266"/><stop offset="0.923" stop-color="#ff7130"/><stop offset="0.964" stop-color="#ff691b"/><stop offset="0.988" stop-color="#ff6500"/><stop offset="1.000" stop-color="#ff6300"/></linearGradient><linearGradient id="g64" gradientUnits="userSpaceOnUse" x1="52" x2="222" y1="0" y2="0"><stop offset="0.000" stop-color="#00eeff"/><stop offset="0.347" stop-color="#00fffc"/><stop offset="0.359" stop-color="#35fffb"/><stop offset="0.371" stop-color="#51fffa"/><stop offset="0.388" stop-color="#70fff8"/><stop offset="0.447" stop-color="#b7fff2"/><stop offset="0.524" stop-color="#feffe9"/><stop offset="0.612" stop-color="#ffc7ab"/><stop offset="0.718" stop-color="#ff9d7a"/><stop offset="0.929" stop-color="#ff6b2d"/><stop offset="0.965" stop-color="#ff641b"/><stop offset="0.982" stop-color="#ff610b"/><stop offset="0.988" stop-color="#ff6000"/><stop offset="1.000" stop-color="#ff5e00"/></linearGradient><linearGradient id="g65" gradientUnits="userSpaceOnUse" x1="53" x2="224" y1="0" y2="0"><stop offset="0.000" stop-color="#00eaff"/><stop offset="0.339" stop-color="#00fdff"/><stop offset="0.345" stop-color="#24feff"/><stop offset="0.351" stop-color="#39feff"/><stop offset="0.380" stop-color="#73fffd"/><stop offset="0.433" stop-color="#b4fff8"/><stop offset="0.515" stop-color="#fffcec"/><stop offset="0.591" stop-color="#ffcab4"/><stop offset="0.702" stop-color="#ff9c7f"/><stop offset="0.912" stop-color="#ff6934"/><stop offset="0.971" stop-color="#ff5f16"/><stop offset="0.988" stop-color="#ff5c00"/><stop offset="1.000" stop-color="#ff5a00"/></linearGradient><linearGradient id="g66" gradientUnits="userSpaceOnUse" x1="53" x2="226" y1="0" y2="0"><stop offset="0.000" stop-color="#00e7ff"/><stop offset="0.335" stop-color="#00f8ff"/><stop offset="0.341" stop-color="#29f8ff"/><stop offset="0.347" stop-color="#3bf9ff"/><stop offset="0.358" stop-color="#56faff"/><stop offset="0.382" stop-color="#7dfcff"/><stop offset="0.439" stop-color="#c4fffd"/><stop offset="0.503" stop-color="#fffdf4"/><stop offset="0.532" stop-color="#ffe6da"/><stop offset="0.590" stop-color="#ffc3b3"/><stop offset="0.694" stop-color="#ff9982"/><stop offset="0.919" stop-color="#ff6331"/><stop offset="0.977" stop-color="#ff5912"/><stop offset="0.988" stop-color="#ff5700"/><stop offset="1.000" stop-color="#ff5500"/></linearGradient><linearGradient id="g67" gradientUnits="userSpaceOnUse" x1="54" x2="229" y1="0" y2="0"><stop offset="0.000" stop-color="#00e4ff"/><stop offset="0.320" stop-color="#00f2ff"/><stop offset="0.326" stop-color="#0df3ff"/><stop offset="0.331" stop-color="#2cf3ff"/><stop offset="0.337" stop-color="#3ef4ff"/><stop offset="0.354" stop-color="#62f5ff"/><stop offset="0.371" stop-color="#7df6ff"/><stop offset="0.423" stop-color="#befbff"/><stop offset="0.486" stop-color="#fffefc"/><stop offset="0.514" stop-color="#ffe6e1"/><stop offset="0.566" stop-color="#ffc6bc"/><stop offset="0.674" stop-color="#ff9886"/><stop offset="0.777" stop-color="#ff7b60"/><stop offset="0.926" stop-color="#ff5c2c"/><stop offset="0.971" stop-color="#ff5412"/><stop offset="0.983" stop-color="#ff5200"/><stop offset="1.000" stop-color="#ff4f00"/></linearGradient><linearGradient id="g68" gradientUnits="userSpaceOnUse" x1="54" x2="231" y1="0" y2="0"><stop offset="0.000" stop-color="#00e0ff"/><stop offset="0.316" stop-color="#00eeff"/><stop offset="0.328" stop-color="#30eeff"/><stop offset="0.333" stop-color="#40efff"/><stop offset="0.362" stop-color="#75f0ff"/><stop offset="0.407" stop-color="#b0f4ff"/><stop offset="0.480" stop-color="#fff9fe"/><stop offset="0.554" stop-color="#ffc5c2"/><stop offset="0.667" stop-color="#ff9589"/><stop offset="0.774" stop-color="#ff7761"/><stop offset="0.921" stop-color="#ff592e"/><stop offset="0.972" stop-color="#ff5012"/><stop offset="0.983" stop-color="#ff4e00"/><stop offset="1.000" stop-color="#ff4b00"/></linearGradient><linearGradient id="g69" gradientUnits="userSpaceOnUse" x1="54" x2="233" y1="0" y2="0"><stop offset="0.000" stop-color="#00ddff"/><stop offset="0.313" stop-color="#00e9ff"/><stop offset="0.324" stop-color="#33e9ff"/><stop offset="0.335" stop-color="#4feaff"/><stop offset="0.352" stop-color="#6debff"/><stop offset="0.397" stop-color="#a9eeff"/><stop offset="0.475" stop-color="#fef4ff"/><stop offset="0.547" stop-color="#ffc2c4"/><stop offset="0.659" stop-color="#ff928b"/><stop offset="0.754" stop-color="#ff7767"/><stop offset="0.911" stop-color="#ff5632"/><stop offset="0.961" stop-color="#ff4d1a"/><stop offset="0.978" stop-color="#ff4a0c"/><stop offset="0.983" stop-color="#ff4900"/><stop offset="1.000" stop-color="#ff4600"/></linearGradient><linearGradient id="g70" gradientUnits="userSpaceOnUse" x1="55" x2="235" y1="0" y2="0"><stop offset="0.000" stop-color="#00daff"/><stop offset="0.306" stop-color="#00e4ff"/><stop offset="0.311" stop-color="#22e4ff"/><stop offset="0.317" stop-color="#36e4ff"/><stop offset="0.333" stop-color="#5be5ff"/><stop offset="0.350" stop-color="#76e6ff"/><stop offset="0.394" stop-color="#afe9ff"/><stop offset="0.472" stop-color="#ffebfc"/><stop offset="0.550" stop-color="#ffb8bf"/><stop offset="0.656" stop-color="#ff8d8b"/><stop offset="0.778" stop-color="#ff6c5f"/><stop offset="0.928" stop-color="#ff4e2b"/><stop offset="0.972" stop-color="#ff4612"/><stop offset="0.983" stop-color="#ff4400"/><stop offset="1.000" stop-color="#ff4100"/></linearGradient><linearGradient id="g71" gradientUnits="userSpaceOnUse" x1="55" x2="237" y1="0" y2="0"><stop offset="0.000" stop-color="#00d6ff"/><stop offset="0.302" stop-color="#00dfff"/><stop offset="0.308" stop-color="#26dfff"/><stop offset="0.313" stop-color="#38dfff"/><stop offset="0.324" stop-color="#52e0ff"/><stop offset="0.341" stop-color="#6ee1ff"/><stop offset="0.385" stop-color="#a8e3ff"/><stop offset="0.467" stop-color="#ffe7fe"/><stop offset="0.544" stop-color="#ffb4c1"/><stop offset="0.648" stop-color="#ff8a8d"/><stop offset="0.769" stop-color="#ff6961"/><stop offset="0.918" stop-color="#ff4b2f"/><stop offset="0.962" stop-color="#ff421a"/><stop offset="0.978" stop-color="#ff3f0c"/><stop offset="0.984" stop-color="#ff3e00"/><stop offset="1.000" stop-color="#ff3b00"/></linearGradient><linearGradient id="g72" gradientUnits="userSpaceOnUse" x1="56" x2="239" y1="0" y2="0"><stop offset="0.000" stop-color="#00d3ff"/><stop offset="0.290" stop-color="#00daff"/><stop offset="0.295" stop-color="#0bdaff"/><stop offset="0.301" stop-color="#2adaff"/><stop offset="0.306" stop-color="#3bdbff"/><stop offset="0.333" stop-color="#6fdcff"/><stop offset="0.388" stop-color="#b4deff"/><stop offset="0.459" stop-color="#fee2ff"/><stop offset="0.536" stop-color="#ffb1c3"/><stop offset="0.645" stop-color="#ff858d"/><stop offset="0.760" stop-color="#ff6663"/><stop offset="0.934" stop-color="#ff4228"/><stop offset="0.973" stop-color="#ff3b12"/><stop offset="0.984" stop-color="#ff3900"/><stop offset="1.000" stop-color="#ff3600"/></linearGradient><linearGradient id="g73" gradientUnits="userSpaceOnUse" x1="56" x2="241" y1="0" y2="0"><stop offset="0.000" stop-color="#00d0ff"/><stop offset="0.286" stop-color="#00d5ff"/><stop offset="0.297" stop-color="#2dd6ff"/><stop offset="0.303" stop-color="#3dd6ff"/><stop offset="0.319" stop-color="#5ed6ff"/><stop offset="0.341" stop-color="#7fd7ff"/><stop offset="0.400" stop-color="#c5d9ff"/><stop offset="0.459" stop-color="#ffdafc"/><stop offset="0.530" stop-color="#ffadc5"/><stop offset="0.638" stop-color="#ff828f"/><stop offset="0.751" stop-color="#ff6366"/><stop offset="0.930" stop-color="#ff3e2a"/><stop offset="0.973" stop-color="#ff3512"/><stop offset="0.984" stop-color="#ff3300"/><stop offset="1.000" stop-color="#ff3000"/></linearGradient><linearGradient id="g74" gradientUnits="userSpaceOnUse" x1="56" x2="243" y1="0" y2="0"><stop offset="0.000" stop-color="#00cdff"/><stop offset="0.283" stop-color="#00d1ff"/><stop offset="0.289" stop-color="#1bd1ff"/><stop offset="0.299" stop-color="#3fd1ff"/><stop offset="0.326" stop-color="#70d2ff"/><stop offset="0.396" stop-color="#c4d4ff"/><stop offset="0.455" stop-color="#ffd5fe"/><stop offset="0.524" stop-color="#ffa9c7"/><stop offset="0.620" stop-color="#ff8296"/><stop offset="0.738" stop-color="#ff616a"/><stop offset="0.920" stop-color="#ff3a2e"/><stop offset="0.968" stop-color="#ff3016"/><stop offset="0.979" stop-color="#ff2e0c"/><stop offset="0.984" stop-color="#ff2c00"/><stop offset="1.000" stop-color="#ff2900"/></linearGradient><linearGradient id="g75" gradientUnits="userSpaceOnUse" x1="57" x2="245" y1="0" y2="0"><stop offset="0.000" stop-color="#00c9ff"/><stop offset="0.277" stop-color="#00ccff"/><stop offset="0.282" stop-color="#20ccff"/><stop offset="0.293" stop-color="#41cdff"/><stop offset="0.324" stop-color="#78cdff"/><stop offset="0.372" stop-color="#b2ceff"/><stop offset="0.447" stop-color="#fed0ff"/><stop offset="0.516" stop-color="#ffa6c9"/><stop offset="0.617" stop-color="#ff7d95"/><stop offset="0.745" stop-color="#ff5a67"/><stop offset="0.936" stop-color="#ff3027"/><stop offset="0.973" stop-color="#ff2812"/><stop offset="0.984" stop-color="#ff2501"/><stop offset="1.000" stop-color="#ff2100"/></linearGradient><linearGradient id="g76" gradientUnits="userSpaceOnUse" x1="57" x2="247" y1="0" y2="0"><stop offset="0.000" stop-color="#00c6ff"/><stop offset="0.274" stop-color="#00c8ff"/><stop offset="0.279" stop-color="#24c8ff"/><stop offset="0.284" stop-color="#36c8ff"/><stop offset="0.300" stop-color="#58c8ff"/><stop offset="0.316" stop-color="#71c8ff"/><stop offset="0.358" stop-color="#a6c9ff"/><stop offset="0.447" stop-color="#ffc8fd"/><stop offset="0.500" stop-color="#ffa7d2"/><stop offset="0.579" stop-color="#ff85a5"/><stop offset="0.711" stop-color="#ff5d72"/><stop offset="0.932" stop-color="#ff2b29"/><stop offset="0.968" stop-color="#ff2116"/><stop offset="0.984" stop-color="#ff1c03"/><stop offset="1.000" stop-color="#ff1700"/></linearGradient><linearGradient id="g77" gradientUnits="userSpaceOnUse" x1="58" x2="249" y1="0" y2="0"><stop offset="0.000" stop-color="#00c3ff"/><stop offset="0.262" stop-color="#00c3ff"/><stop offset="0.267" stop-color="#0ac3ff"/><stop offset="0.272" stop-color="#28c3ff"/><stop offset="0.277" stop-color="#38c3ff"/><stop offset="0.304" stop-color="#6ac3ff"/><stop offset="0.361" stop-color="#b1c4ff"/><stop offset="0.440" stop-color="#ffc4fe"/><stop offset="0.497" stop-color="#ffa0d0"/><stop offset="0.581" stop-color="#ff7da2"/><stop offset="0.691" stop-color="#ff5d77"/><stop offset="0.942" stop-color="#ff2024"/><stop offset="0.969" stop-color="#ff1716"/><stop offset="0.984" stop-color="#ff1004"/><stop offset="1.000" stop-color="#ff0000"/></linearGradient><linearGradient id="g78" gradientUnits="userSpaceOnUse" x1="58" x2="247" y1="0" y2="0"><stop offset="0.000" stop-color="#00c0ff"/><stop offset="0.265" stop-color="#00bfff"/><stop offset="0.275" stop-color="#2bbfff"/><stop offset="0.280" stop-color="#3abfff"/><stop offset="0.291" stop-color="#51bfff"/><stop offset="0.312" stop-color="#72bfff"/><stop offset="0.370" stop-color="#b6beff"/><stop offset="0.444" stop-color="#febeff"/><stop offset="0.513" stop-color="#ff97cb"/><stop offset="0.603" stop-color="#ff749d"/><stop offset="0.698" stop-color="#ff5979"/><stop offset="0.931" stop-color="#ff2030"/><stop offset="0.968" stop-color="#ff1221"/><stop offset="0.989" stop-color="#ff0016"/><stop offset="1.000" stop-color="#ff000d"/></linearGradient><linearGradient id="g79" gradientUnits="userSpaceOnUse" x1="59" x2="243" y1="0" y2="0"><stop offset="0.000" stop-color="#00bcff"/><stop offset="0.266" stop-color="#00bbff"/><stop offset="0.272" stop-color="#1abaff"/><stop offset="0.283" stop-color="#3cbaff"/><stop offset="0.310" stop-color="#6bbaff"/><stop offset="0.370" stop-color="#b0b9ff"/><stop offset="0.457" stop-color="#ffb7fd"/><stop offset="0.522" stop-color="#ff93cd"/><stop offset="0.609" stop-color="#ff73a1"/><stop offset="0.717" stop-color="#ff5479"/><stop offset="0.929" stop-color="#ff203a"/><stop offset="0.962" stop-color="#ff1430"/><stop offset="0.989" stop-color="#ff0026"/><stop offset="1.000" stop-color="#ff0021"/></linearGradient><linearGradient id="g80" gradientUnits="userSpaceOnUse" x1="59" x2="238" y1="0" y2="0"><stop offset="0.000" stop-color="#00b9ff"/><stop offset="0.274" stop-color="#00b6ff"/><stop offset="0.279" stop-color="#1fb6ff"/><stop offset="0.291" stop-color="#3eb6ff"/><stop offset="0.324" stop-color="#73b5ff"/><stop offset="0.374" stop-color="#aab4ff"/><stop offset="0.469" stop-color="#ffb2ff"/><stop offset="0.531" stop-color="#ff92d2"/><stop offset="0.648" stop-color="#ff689a"/><stop offset="0.916" stop-color="#ff2548"/><stop offset="0.966" stop-color="#ff143a"/><stop offset="0.983" stop-color="#ff0a35"/><stop offset="0.989" stop-color="#ff0033"/><stop offset="1.000" stop-color="#ff002f"/></linearGradient><linearGradient id="g81" gradientUnits="userSpaceOnUse" x1="60" x2="234" y1="0" y2="0"><stop offset="0.000" stop-color="#00b6ff"/><stop offset="0.276" stop-color="#00b2ff"/><stop offset="0.282" stop-color="#23b2ff"/><stop offset="0.287" stop-color="#33b2ff"/><stop offset="0.316" stop-color="#65b1ff"/><stop offset="0.385" stop-color="#afafff"/><stop offset="0.477" stop-color="#feadff"/><stop offset="0.557" stop-color="#ff86ca"/><stop offset="0.655" stop-color="#ff669e"/><stop offset="0.776" stop-color="#ff4776"/><stop offset="0.931" stop-color="#ff204c"/><stop offset="0.977" stop-color="#ff0d40"/><stop offset="0.989" stop-color="#ff003d"/><stop offset="1.000" stop-color="#ff003a"/></linearGradient><linearGradient id="g82" gradientUnits="userSpaceOnUse" x1="60" x2="230" y1="0" y2="0"><stop offset="0.000" stop-color="#00b3ff"/><stop offset="0.276" stop-color="#00aeff"/><stop offset="0.282" stop-color="#08adff"/><stop offset="0.288" stop-color="#26adff"/><stop offset="0.300" stop-color="#42adff"/><stop offset="0.335" stop-color="#74acff"/><stop offset="0.388" stop-color="#a9abff"/><stop offset="0.494" stop-color="#ffa5fd"/><stop offset="0.559" stop-color="#ff87d2"/><stop offset="0.665" stop-color="#ff63a2"/><stop offset="0.776" stop-color="#ff477d"/><stop offset="0.924" stop-color="#ff2256"/><stop offset="0.965" stop-color="#ff134c"/><stop offset="0.988" stop-color="#ff0046"/><stop offset="1.000" stop-color="#ff0043"/></linearGradient><linearGradient id="g83" gradientUnits="userSpaceOnUse" x1="61" x2="226" y1="0" y2="0"><stop offset="0.000" stop-color="#00afff"/><stop offset="0.279" stop-color="#00a9ff"/><stop offset="0.297" stop-color="#38a9ff"/><stop offset="0.315" stop-color="#56a8ff"/><stop offset="0.345" stop-color="#7ba7ff"/><stop offset="0.400" stop-color="#aea5ff"/><stop offset="0.503" stop-color="#ffa1ff"/><stop offset="0.564" stop-color="#ff85d7"/><stop offset="0.703" stop-color="#ff599b"/><stop offset="0.921" stop-color="#ff225e"/><stop offset="0.970" stop-color="#ff0f52"/><stop offset="0.982" stop-color="#ff024f"/><stop offset="1.000" stop-color="#ff004b"/></linearGradient><linearGradient id="g84" gradientUnits="userSpaceOnUse" x1="61" x2="221" y1="0" y2="0"><stop offset="0.000" stop-color="#00acff"/><stop offset="0.287" stop-color="#00a5ff"/><stop offset="0.300" stop-color="#2ca5ff"/><stop offset="0.306" stop-color="#3aa4ff"/><stop offset="0.344" stop-color="#6ea3ff"/><stop offset="0.400" stop-color="#a3a1ff"/><stop offset="0.519" stop-color="#fe9bff"/><stop offset="0.600" stop-color="#ff7acf"/><stop offset="0.713" stop-color="#ff58a1"/><stop offset="0.919" stop-color="#ff2468"/><stop offset="0.975" stop-color="#ff0e5a"/><stop offset="0.988" stop-color="#ff0057"/><stop offset="1.000" stop-color="#ff0054"/></linearGradient><linearGradient id="g85" gradientUnits="userSpaceOnUse" x1="62" x2="217" y1="0" y2="0"><stop offset="0.000" stop-color="#00a9ff"/><stop offset="0.290" stop-color="#00a1ff"/><stop offset="0.297" stop-color="#1da1ff"/><stop offset="0.310" stop-color="#3ca0ff"/><stop offset="0.355" stop-color="#759eff"/><stop offset="0.432" stop-color="#b79bff"/><stop offset="0.535" stop-color="#ff94fd"/><stop offset="0.600" stop-color="#ff79d7"/><stop offset="0.716" stop-color="#ff56a7"/><stop offset="0.910" stop-color="#ff2671"/><stop offset="0.968" stop-color="#ff1164"/><stop offset="0.987" stop-color="#ff005f"/><stop offset="1.000" stop-color="#ff005c"/></linearGradient><linearGradient id="g86" gradientUnits="userSpaceOnUse" x1="62" x2="213" y1="0" y2="0"><stop offset="0.000" stop-color="#00a5ff"/><stop offset="0.298" stop-color="#009cff"/><stop offset="0.305" stop-color="#219cff"/><stop offset="0.311" stop-color="#319cff"/><stop offset="0.331" stop-color="#519bff"/><stop offset="0.358" stop-color="#6f9aff"/><stop offset="0.457" stop-color="#c095ff"/><stop offset="0.550" stop-color="#ff8fff"/><stop offset="0.609" stop-color="#ff77dc"/><stop offset="0.728" stop-color="#ff53ab"/><stop offset="0.934" stop-color="#ff1e73"/><stop offset="0.967" stop-color="#ff106b"/><stop offset="0.987" stop-color="#ff0067"/><stop offset="1.000" stop-color="#ff0064"/></linearGradient><linearGradient id="g87" gradientUnits="userSpaceOnUse" x1="63" x2="208" y1="0" y2="0"><stop offset="0.000" stop-color="#00a2ff"/><stop offset="0.297" stop-color="#0098ff"/><stop offset="0.303" stop-color="#0798ff"/><stop offset="0.310" stop-color="#2598ff"/><stop offset="0.317" stop-color="#3498ff"/><stop offset="0.338" stop-color="#5297ff"/><stop offset="0.366" stop-color="#6f95ff"/><stop offset="0.455" stop-color="#b691ff"/><stop offset="0.566" stop-color="#fe89ff"/><stop offset="0.634" stop-color="#ff70da"/><stop offset="0.738" stop-color="#ff52b1"/><stop offset="0.938" stop-color="#ff1e7b"/><stop offset="0.972" stop-color="#ff0f73"/><stop offset="0.986" stop-color="#ff0070"/><stop offset="1.000" stop-color="#ff006d"/></linearGradient><linearGradient id="g88" gradientUnits="userSpaceOnUse" x1="64" x2="204" y1="0" y2="0"><stop offset="0.000" stop-color="#009fff"/><stop offset="0.300" stop-color="#0094ff"/><stop offset="0.321" stop-color="#3693ff"/><stop offset="0.343" stop-color="#5392ff"/><stop offset="0.371" stop-color="#7091ff"/><stop offset="0.443" stop-color="#a78dff"/><stop offset="0.586" stop-color="#ff81fd"/><stop offset="0.643" stop-color="#ff6ddf"/><stop offset="0.750" stop-color="#ff4fb5"/><stop offset="0.936" stop-color="#ff1e83"/><stop offset="0.971" stop-color="#ff0e7b"/><stop offset="0.986" stop-color="#ff0078"/><stop offset="1.000" stop-color="#ff0075"/></linearGradient><linearGradient id="g89" gradientUnits="userSpaceOnUse" x1="64" x2="200" y1="0" y2="0"><stop offset="0.000" stop-color="#009bff"/><stop offset="0.309" stop-color="#0090ff"/><stop offset="0.324" stop-color="#2b8fff"/><stop offset="0.331" stop-color="#388fff"/><stop offset="0.375" stop-color="#6a8dff"/><stop offset="0.471" stop-color="#b087ff"/><stop offset="0.603" stop-color="#ff7cff"/><stop offset="0.676" stop-color="#ff63da"/><stop offset="0.765" stop-color="#ff4bb9"/><stop offset="0.912" stop-color="#ff2590"/><stop offset="0.956" stop-color="#ff1586"/><stop offset="0.985" stop-color="#ff0080"/><stop offset="1.000" stop-color="#ff007d"/></linearGradient><linearGradient id="g90" gradientUnits="userSpaceOnUse" x1="65" x2="195" y1="0" y2="0"><stop offset="0.000" stop-color="#0098ff"/><stop offset="0.315" stop-color="#008cff"/><stop offset="0.323" stop-color="#1c8bff"/><stop offset="0.338" stop-color="#398aff"/><stop offset="0.385" stop-color="#6a88ff"/><stop offset="0.477" stop-color="#ab82ff"/><stop offset="0.623" stop-color="#fe76ff"/><stop offset="0.685" stop-color="#ff62e2"/><stop offset="0.800" stop-color="#ff43b8"/><stop offset="0.946" stop-color="#ff1b92"/><stop offset="0.977" stop-color="#ff0b8b"/><stop offset="0.985" stop-color="#ff0089"/><stop offset="1.000" stop-color="#ff0086"/></linearGradient><linearGradient id="g91" gradientUnits="userSpaceOnUse" x1="65" x2="191" y1="0" y2="0"><stop offset="0.000" stop-color="#0094ff"/><stop offset="0.325" stop-color="#0087ff"/><stop offset="0.333" stop-color="#2087ff"/><stop offset="0.349" stop-color="#3b86ff"/><stop offset="0.397" stop-color="#6b83ff"/><stop offset="0.484" stop-color="#a67dff"/><stop offset="0.651" stop-color="#ff6efe"/><stop offset="0.786" stop-color="#ff47c6"/><stop offset="0.921" stop-color="#ff23a0"/><stop offset="0.960" stop-color="#ff1497"/><stop offset="0.984" stop-color="#ff0092"/><stop offset="1.000" stop-color="#ff008e"/></linearGradient><linearGradient id="g92" gradientUnits="userSpaceOnUse" x1="66" x2="187" y1="0" y2="0"><stop offset="0.000" stop-color="#0091ff"/><stop offset="0.322" stop-color="#0083ff"/><stop offset="0.331" stop-color="#0583ff"/><stop offset="0.339" stop-color="#2382ff"/><stop offset="0.347" stop-color="#3282ff"/><stop offset="0.397" stop-color="#657fff"/><stop offset="0.488" stop-color="#a179ff"/><stop offset="0.669" stop-color="#ff68ff"/><stop offset="0.802" stop-color="#ff42ca"/><stop offset="0.917" stop-color="#ff23aa"/><stop offset="0.959" stop-color="#ff13a0"/><stop offset="0.983" stop-color="#ff009a"/><stop offset="1.000" stop-color="#ff0097"/></linearGradient><linearGradient id="g93" gradientUnits="userSpaceOnUse" x1="67" x2="182" y1="0" y2="0"><stop offset="0.000" stop-color="#008dff"/><stop offset="0.330" stop-color="#007fff"/><stop offset="0.357" stop-color="#347eff"/><stop offset="0.417" stop-color="#6c7aff"/><stop offset="0.522" stop-color="#aa72ff"/><stop offset="0.696" stop-color="#fe61ff"/><stop offset="0.817" stop-color="#ff40d1"/><stop offset="0.913" stop-color="#ff26b6"/><stop offset="0.965" stop-color="#ff12a9"/><stop offset="0.983" stop-color="#ff00a5"/><stop offset="1.000" stop-color="#ff00a2"/></linearGradient><linearGradient id="g94" gradientUnits="userSpaceOnUse" x1="68" x2="178" y1="0" y2="0"><stop offset="0.000" stop-color="#008aff"/><stop offset="0.336" stop-color="#007bff"/><stop offset="0.355" stop-color="#297aff"/><stop offset="0.364" stop-color="#3679ff"/><stop offset="0.391" stop-color="#5177ff"/><stop offset="0.436" stop-color="#7274ff"/><stop offset="0.545" stop-color="#ae6cff"/><stop offset="0.718" stop-color="#fc59ff"/><stop offset="0.900" stop-color="#ff29c3"/><stop offset="0.955" stop-color="#ff16b5"/><stop offset="0.982" stop-color="#ff00af"/><stop offset="1.000" stop-color="#ff00ab"/></linearGradient><linearGradient id="g95" gradientUnits="userSpaceOnUse" x1="68" x2="174" y1="0" y2="0"><stop offset="0.000" stop-color="#0086ff"/><stop offset="0.349" stop-color="#0076ff"/><stop offset="0.358" stop-color="#1b76ff"/><stop offset="0.377" stop-color="#3774ff"/><stop offset="0.443" stop-color="#6d70ff"/><stop offset="0.575" stop-color="#b265ff"/><stop offset="0.755" stop-color="#ff50ff"/><stop offset="0.934" stop-color="#ff1dc5"/><stop offset="0.962" stop-color="#ff10bd"/><stop offset="0.981" stop-color="#ff00b9"/><stop offset="1.000" stop-color="#ff00b5"/></linearGradient><linearGradient id="g96" gradientUnits="userSpaceOnUse" x1="69" x2="170" y1="0" y2="0"><stop offset="0.000" stop-color="#0082ff"/><stop offset="0.356" stop-color="#0072ff"/><stop offset="0.366" stop-color="#1e71ff"/><stop offset="0.386" stop-color="#3970ff"/><stop offset="0.416" stop-color="#536eff"/><stop offset="0.465" stop-color="#736aff"/><stop offset="0.574" stop-color="#a961ff"/><stop offset="0.782" stop-color="#fe48ff"/><stop offset="0.931" stop-color="#ff1dd0"/><stop offset="0.960" stop-color="#ff0ec8"/><stop offset="0.970" stop-color="#ff02c6"/><stop offset="1.000" stop-color="#ff00bf"/></linearGradient><linearGradient id="g97" gradientUnits="userSpaceOnUse" x1="70" x2="165" y1="0" y2="0"><stop offset="0.000" stop-color="#007eff"/><stop offset="0.358" stop-color="#006eff"/><stop offset="0.368" stop-color="#036dff"/><stop offset="0.379" stop-color="#226cff"/><stop offset="0.389" stop-color="#306cff"/><stop offset="0.432" stop-color="#5469ff"/><stop offset="0.495" stop-color="#7964ff"/><stop offset="0.611" stop-color="#ad5aff"/><stop offset="0.832" stop-color="#ff3dfe"/><stop offset="0.937" stop-color="#ff1ddd"/><stop offset="0.968" stop-color="#ff0cd4"/><stop offset="0.979" stop-color="#ff00d2"/><stop offset="1.000" stop-color="#ff00cc"/></linearGradient><linearGradient id="g98" gradientUnits="userSpaceOnUse" x1="71" x2="161" y1="0" y2="0"><stop offset="0.000" stop-color="#007aff"/><stop offset="0.367" stop-color="#0069ff"/><stop offset="0.400" stop-color="#3267ff"/><stop offset="0.444" stop-color="#5564ff"/><stop offset="0.511" stop-color="#795fff"/><stop offset="0.611" stop-color="#a456ff"/><stop offset="0.756" stop-color="#d946ff"/><stop offset="0.867" stop-color="#ff32ff"/><stop offset="0.944" stop-color="#ff18e7"/><stop offset="0.978" stop-color="#ff00de"/><stop offset="1.000" stop-color="#ff00d8"/></linearGradient><linearGradient id="g99" gradientUnits="userSpaceOnUse" x1="71" x2="157" y1="0" y2="0"><stop offset="0.000" stop-color="#0077ff"/><stop offset="0.384" stop-color="#0064ff"/><stop offset="0.407" stop-color="#2763ff"/><stop offset="0.442" stop-color="#4760ff"/><stop offset="0.500" stop-color="#695cff"/><stop offset="0.593" stop-color="#9254ff"/><stop offset="0.779" stop-color="#d43fff"/><stop offset="0.907" stop-color="#fe25ff"/><stop offset="0.942" stop-color="#ff17f6"/><stop offset="0.977" stop-color="#ff00ec"/><stop offset="1.000" stop-color="#ff00e5"/></linearGradient><linearGradient id="g100" gradientUnits="userSpaceOnUse" x1="72" x2="152" y1="0" y2="0"><stop offset="0.000" stop-color="#0073ff"/><stop offset="0.400" stop-color="#005fff"/><stop offset="0.412" stop-color="#1a5eff"/><stop offset="0.438" stop-color="#365dff"/><stop offset="0.537" stop-color="#6f55ff"/><stop offset="0.662" stop-color="#9f4aff"/><stop offset="0.850" stop-color="#db31ff"/><stop offset="0.938" stop-color="#f51bff"/><stop offset="0.963" stop-color="#fc0eff"/><stop offset="0.975" stop-color="#ff00fe"/><stop offset="1.000" stop-color="#ff00f7"/></linearGradient><linearGradient id="g101" gradientUnits="userSpaceOnUse" x1="73" x2="148" y1="0" y2="0"><stop offset="0.000" stop-color="#006eff"/><stop offset="0.413" stop-color="#005aff"/><stop offset="0.427" stop-color="#1d59ff"/><stop offset="0.440" stop-color="#2c58ff"/><stop offset="0.467" stop-color="#4157ff"/><stop offset="0.533" stop-color="#6452ff"/><stop offset="0.693" stop-color="#9f43ff"/><stop offset="0.853" stop-color="#cf2dff"/><stop offset="0.933" stop-color="#e519ff"/><stop offset="0.973" stop-color="#f000ff"/><stop offset="1.000" stop-color="#f700ff"/></linearGradient><linearGradient id="g102" gradientUnits="userSpaceOnUse" x1="74" x2="144" y1="0" y2="0"><stop offset="0.000" stop-color="#006aff"/><stop offset="0.429" stop-color="#0055ff"/><stop offset="0.443" stop-color="#2154ff"/><stop offset="0.471" stop-color="#3952ff"/><stop offset="0.571" stop-color="#6a4aff"/><stop offset="0.829" stop-color="#bb2eff"/><stop offset="0.929" stop-color="#d517ff"/><stop offset="0.971" stop-color="#e000ff"/><stop offset="1.000" stop-color="#e800ff"/></linearGradient><linearGradient id="g103" gradientUnits="userSpaceOnUse" x1="75" x2="139" y1="0" y2="0"><stop offset="0.000" stop-color="#0066ff"/><stop offset="0.438" stop-color="#0050ff"/><stop offset="0.484" stop-color="#304dff"/><stop offset="0.531" stop-color="#4b4aff"/><stop offset="0.594" stop-color="#6545ff"/><stop offset="0.844" stop-color="#ae2aff"/><stop offset="0.938" stop-color="#c615ff"/><stop offset="0.969" stop-color="#cd00ff"/><stop offset="1.000" stop-color="#d500ff"/></linearGradient><linearGradient id="g104" gradientUnits="userSpaceOnUse" x1="76" x2="135" y1="0" y2="0"><stop offset="0.000" stop-color="#0061ff"/><stop offset="0.458" stop-color="#004bff"/><stop offset="0.492" stop-color="#2648ff"/><stop offset="0.508" stop-color="#3247ff"/><stop offset="0.576" stop-color="#5342ff"/><stop offset="0.729" stop-color="#8435ff"/><stop offset="0.864" stop-color="#a623ff"/><stop offset="0.915" stop-color="#b218ff"/><stop offset="0.966" stop-color="#be00ff"/><stop offset="1.000" stop-color="#c500ff"/></linearGradient><linearGradient id="g105" gradientUnits="userSpaceOnUse" x1="77" x2="131" y1="0" y2="0"><stop offset="0.000" stop-color="#005cff"/><stop offset="0.481" stop-color="#0045ff"/><stop offset="0.500" stop-color="#1943ff"/><stop offset="0.519" stop-color="#2942ff"/><stop offset="0.611" stop-color="#543bff"/><stop offset="0.815" stop-color="#8d27ff"/><stop offset="0.907" stop-color="#a216ff"/><stop offset="0.963" stop-color="#ae00ff"/><stop offset="1.000" stop-color="#b500ff"/></linearGradient><linearGradient id="g106" gradientUnits="userSpaceOnUse" x1="78" x2="126" y1="0" y2="0"><stop offset="0.000" stop-color="#0057ff"/><stop offset="0.521" stop-color="#003eff"/><stop offset="0.542" stop-color="#1c3dff"/><stop offset="0.562" stop-color="#2b3bff"/><stop offset="0.625" stop-color="#4737ff"/><stop offset="0.750" stop-color="#6c2cff"/><stop offset="0.875" stop-color="#881cff"/><stop offset="0.938" stop-color="#950eff"/><stop offset="0.958" stop-color="#9a00ff"/><stop offset="1.000" stop-color="#a200ff"/></linearGradient><linearGradient id="g107" gradientUnits="userSpaceOnUse" x1="79" x2="122" y1="0" y2="0"><stop offset="0.000" stop-color="#0052ff"/><stop offset="0.558" stop-color="#0037ff"/><stop offset="0.581" stop-color="#1f36ff"/><stop offset="0.674" stop-color="#482fff"/><stop offset="0.860" stop-color="#761bff"/><stop offset="0.907" stop-color="#8012ff"/><stop offset="0.953" stop-color="#8900ff"/><stop offset="1.000" stop-color="#9100ff"/></linearGradient><linearGradient id="g108" gradientUnits="userSpaceOnUse" x1="80" x2="118" y1="0" y2="0"><stop offset="0.000" stop-color="#004cff"/><stop offset="0.579" stop-color="#0031ff"/><stop offset="0.632" stop-color="#222dff"/><stop offset="0.684" stop-color="#3929ff"/><stop offset="0.868" stop-color="#6715ff"/><stop offset="0.947" stop-color="#7600ff"/><stop offset="1.000" stop-color="#8000ff"/></linearGradient><linearGradient id="g109" gradientUnits="userSpaceOnUse" x1="82" x2="113" y1="0" y2="0"><stop offset="0.000" stop-color="#0045ff"/><stop offset="0.645" stop-color="#0028ff"/><stop offset="0.710" stop-color="#2524ff"/><stop offset="0.742" stop-color="#3121ff"/><stop offset="0.903" stop-color="#570eff"/><stop offset="0.935" stop-color="#5d00ff"/><stop offset="1.000" stop-color="#6800ff"/></linearGradient><linearGradient id="g110" gradientUnits="userSpaceOnUse" x1="84" x2="109" y1="0" y2="0"><stop offset="0.000" stop-color="#003dff"/><stop offset="0.720" stop-color="#001dff"/><stop offset="0.760" stop-color="#181aff"/><stop offset="0.800" stop-color="#2716ff"/><stop offset="0.920" stop-color="#4300ff"/><stop offset="1.000" stop-color="#5100ff"/></linearGradient><linearGradient id="g111" gradientUnits="userSpaceOnUse" x1="86" x2="105" y1="0" y2="0"><stop offset="0.000" stop-color="#0034ff"/><stop offset="0.526" stop-color="#0021ff"/><stop offset="0.842" stop-color="#0008ff"/><stop offset="0.895" stop-color="#1b00ff"/><stop offset="1.000" stop-color="#3400ff"/></linearGradient><linearGradient id="g112" gradientUnits="userSpaceOnUse" x1="88" x2="101" y1="0" y2="0"><stop offset="0.000" stop-color="#0028ff"/><stop offset="0.538" stop-color="#0017ff"/><stop offset="0.769" stop-color="#0003ff"/><stop offset="1.000" stop-color="#0000ff"/></linearGradient><linearGradient id="g113" gradientUnits="userSpaceOnUse" x1="90" x2="97" y1="0" y2="0"><stop offset="0.000" stop-color="#0019ff"/><stop offset="0.429" stop-color="#000bff"/><stop offset="0.571" stop-color="#0000ff"/><stop offset="1.000" stop-color="#0000ff"/></linearGradient>
</defs>
<path d="M12.2 5.3 C15.3 5.3 17.8 10 17.8 13.8 C17.8 17.5 15.3 19.9 12.2 19.9 C9.1 19.9 6.6 17.5 6.6 13.8 C6.6 10 9.1 5.3 12.2 5.3Z" fill="url(#egg)"/>
<path d="M580.2 8 L589.4 17.2 M589.4 8 L580.2 17.2" stroke="#1c1c1c" stroke-width="1.15" fill="none"/>
<polygon points="0,40 1.4,40 3,478 3,481 0,481" fill="url(#wl)"/>
<!-- CIE plot -->
<rect x="46" y="108" width="242" height="246" fill="#e1e1e1"/>
<g stroke="#c9c9c9" stroke-width="1"><line x1="73.6" y1="108" x2="73.6" y2="354"/><line x1="46" y1="326.5" x2="288" y2="326.5"/><line x1="101.0" y1="108" x2="101.0" y2="354"/><line x1="46" y1="299.1" x2="288" y2="299.1"/><line x1="128.3" y1="108" x2="128.3" y2="354"/><line x1="46" y1="271.8" x2="288" y2="271.8"/><line x1="155.6" y1="108" x2="155.6" y2="354"/><line x1="46" y1="244.5" x2="288" y2="244.5"/><line x1="183.0" y1="108" x2="183.0" y2="354"/><line x1="46" y1="217.1" x2="288" y2="217.1"/><line x1="210.3" y1="108" x2="210.3" y2="354"/><line x1="46" y1="189.8" x2="288" y2="189.8"/><line x1="237.6" y1="108" x2="237.6" y2="354"/><line x1="46" y1="162.5" x2="288" y2="162.5"/><line x1="264.9" y1="108" x2="264.9" y2="354"/><line x1="46" y1="135.2" x2="288" y2="135.2"/></g>
<g clip-path="url(#lc)" opacity="0.97"><rect x="63" y="125" width="12" height="2.6" fill="url(#g0)"/><rect x="58" y="127" width="23" height="2.6" fill="url(#g1)"/><rect x="56" y="129" width="29" height="2.6" fill="url(#g2)"/><rect x="54" y="131" width="35" height="2.6" fill="url(#g3)"/><rect x="53" y="133" width="39" height="2.6" fill="url(#g4)"/><rect x="52" y="135" width="44" height="2.6" fill="url(#g5)"/><rect x="51" y="137" width="48" height="2.6" fill="url(#g6)"/><rect x="50" y="139" width="52" height="2.6" fill="url(#g7)"/><rect x="49" y="141" width="55" height="2.6" fill="url(#g8)"/><rect x="49" y="143" width="58" height="2.6" fill="url(#g9)"/><rect x="48" y="145" width="62" height="2.6" fill="url(#g10)"/><rect x="48" y="147" width="64" height="2.6" fill="url(#g11)"/><rect x="47" y="149" width="68" height="2.6" fill="url(#g12)"/><rect x="47" y="151" width="70" height="2.6" fill="url(#g13)"/><rect x="47" y="153" width="73" height="2.6" fill="url(#g14)"/><rect x="46" y="155" width="76" height="2.6" fill="url(#g15)"/><rect x="46" y="157" width="78" height="2.6" fill="url(#g16)"/><rect x="46" y="159" width="81" height="2.6" fill="url(#g17)"/><rect x="46" y="161" width="83" height="2.6" fill="url(#g18)"/><rect x="45" y="163" width="86" height="2.6" fill="url(#g19)"/><rect x="45" y="165" width="88" height="2.6" fill="url(#g20)"/><rect x="45" y="167" width="90" height="2.6" fill="url(#g21)"/><rect x="45" y="169" width="92" height="2.6" fill="url(#g22)"/><rect x="45" y="171" width="94" height="2.6" fill="url(#g23)"/><rect x="45" y="173" width="97" height="2.6" fill="url(#g24)"/><rect x="45" y="175" width="99" height="2.6" fill="url(#g25)"/><rect x="45" y="177" width="101" height="2.6" fill="url(#g26)"/><rect x="45" y="179" width="103" height="2.6" fill="url(#g27)"/><rect x="45" y="181" width="105" height="2.6" fill="url(#g28)"/><rect x="45" y="183" width="107" height="2.6" fill="url(#g29)"/><rect x="45" y="185" width="109" height="2.6" fill="url(#g30)"/><rect x="45" y="187" width="111" height="2.6" fill="url(#g31)"/><rect x="45" y="189" width="113" height="2.6" fill="url(#g32)"/><rect x="45" y="191" width="115" height="2.6" fill="url(#g33)"/><rect x="45" y="193" width="117" height="2.6" fill="url(#g34)"/><rect x="45" y="195" width="119" height="2.6" fill="url(#g35)"/><rect x="45" y="197" width="121" height="2.6" fill="url(#g36)"/><rect x="46" y="199" width="122" height="2.6" fill="url(#g37)"/><rect x="46" y="201" width="124" height="2.6" fill="url(#g38)"/><rect x="46" y="203" width="126" height="2.6" fill="url(#g39)"/><rect x="46" y="205" width="128" height="2.6" fill="url(#g40)"/><rect x="46" y="207" width="130" height="2.6" fill="url(#g41)"/><rect x="46" y="209" width="132" height="2.6" fill="url(#g42)"/><rect x="47" y="211" width="133" height="2.6" fill="url(#g43)"/><rect x="47" y="213" width="135" height="2.6" fill="url(#g44)"/><rect x="47" y="215" width="137" height="2.6" fill="url(#g45)"/><rect x="47" y="217" width="139" height="2.6" fill="url(#g46)"/><rect x="47" y="219" width="141" height="2.6" fill="url(#g47)"/><rect x="48" y="221" width="142" height="2.6" fill="url(#g48)"/><rect x="48" y="223" width="144" height="2.6" fill="url(#g49)"/><rect x="48" y="225" width="146" height="2.6" fill="url(#g50)"/><rect x="48" y="227" width="148" height="2.6" fill="url(#g51)"/><rect x="49" y="229" width="149" height="2.6" fill="url(#g52)"/><rect x="49" y="231" width="151" height="2.6" fill="url(#g53)"/><rect x="49" y="233" width="153" height="2.6" fill="url(#g54)"/><rect x="49" y="235" width="155" height="2.6" fill="url(#g55)"/><rect x="50" y="237" width="156" height="2.6" fill="url(#g56)"/><rect x="50" y="239" width="158" height="2.6" fill="url(#g57)"/><rect x="50" y="241" width="160" height="2.6" fill="url(#g58)"/><rect x="51" y="243" width="161" height="2.6" fill="url(#g59)"/><rect x="51" y="245" width="163" height="2.6" fill="url(#g60)"/><rect x="51" y="247" width="165" height="2.6" fill="url(#g61)"/><rect x="52" y="249" width="166" height="2.6" fill="url(#g62)"/><rect x="52" y="251" width="168" height="2.6" fill="url(#g63)"/><rect x="52" y="253" width="170" height="2.6" fill="url(#g64)"/><rect x="53" y="255" width="171" height="2.6" fill="url(#g65)"/><rect x="53" y="257" width="173" height="2.6" fill="url(#g66)"/><rect x="54" y="259" width="175" height="2.6" fill="url(#g67)"/><rect x="54" y="261" width="177" height="2.6" fill="url(#g68)"/><rect x="54" y="263" width="179" height="2.6" fill="url(#g69)"/><rect x="55" y="265" width="180" height="2.6" fill="url(#g70)"/><rect x="55" y="267" width="182" height="2.6" fill="url(#g71)"/><rect x="56" y="269" width="183" height="2.6" fill="url(#g72)"/><rect x="56" y="271" width="185" height="2.6" fill="url(#g73)"/><rect x="56" y="273" width="187" height="2.6" fill="url(#g74)"/><rect x="57" y="275" width="188" height="2.6" fill="url(#g75)"/><rect x="57" y="277" width="190" height="2.6" fill="url(#g76)"/><rect x="58" y="279" width="191" height="2.6" fill="url(#g77)"/><rect x="58" y="281" width="189" height="2.6" fill="url(#g78)"/><rect x="59" y="283" width="184" height="2.6" fill="url(#g79)"/><rect x="59" y="285" width="179" height="2.6" fill="url(#g80)"/><rect x="60" y="287" width="174" height="2.6" fill="url(#g81)"/><rect x="60" y="289" width="170" height="2.6" fill="url(#g82)"/><rect x="61" y="291" width="165" height="2.6" fill="url(#g83)"/><rect x="61" y="293" width="160" height="2.6" fill="url(#g84)"/><rect x="62" y="295" width="155" height="2.6" fill="url(#g85)"/><rect x="62" y="297" width="151" height="2.6" fill="url(#g86)"/><rect x="63" y="299" width="145" height="2.6" fill="url(#g87)"/><rect x="64" y="301" width="140" height="2.6" fill="url(#g88)"/><rect x="64" y="303" width="136" height="2.6" fill="url(#g89)"/><rect x="65" y="305" width="130" height="2.6" fill="url(#g90)"/><rect x="65" y="307" width="126" height="2.6" fill="url(#g91)"/><rect x="66" y="309" width="121" height="2.6" fill="url(#g92)"/><rect x="67" y="311" width="115" height="2.6" fill="url(#g93)"/><rect x="68" y="313" width="110" height="2.6" fill="url(#g94)"/><rect x="68" y="315" width="106" height="2.6" fill="url(#g95)"/><rect x="69" y="317" width="101" height="2.6" fill="url(#g96)"/><rect x="70" y="319" width="95" height="2.6" fill="url(#g97)"/><rect x="71" y="321" width="90" height="2.6" fill="url(#g98)"/><rect x="71" y="323" width="86" height="2.6" fill="url(#g99)"/><rect x="72" y="325" width="80" height="2.6" fill="url(#g100)"/><rect x="73" y="327" width="75" height="2.6" fill="url(#g101)"/><rect x="74" y="329" width="70" height="2.6" fill="url(#g102)"/><rect x="75" y="331" width="64" height="2.6" fill="url(#g103)"/><rect x="76" y="333" width="59" height="2.6" fill="url(#g104)"/><rect x="77" y="335" width="54" height="2.6" fill="url(#g105)"/><rect x="78" y="337" width="48" height="2.6" fill="url(#g106)"/><rect x="79" y="339" width="43" height="2.6" fill="url(#g107)"/><rect x="80" y="341" width="38" height="2.6" fill="url(#g108)"/><rect x="82" y="343" width="31" height="2.6" fill="url(#g109)"/><rect x="84" y="345" width="25" height="2.6" fill="url(#g110)"/><rect x="86" y="347" width="19" height="2.6" fill="url(#g111)"/><rect x="88" y="349" width="13" height="2.6" fill="url(#g112)"/><rect x="90" y="351" width="7" height="2.6" fill="url(#g113)"/></g>
<g clip-path="url(#lc)" stroke="#000" stroke-opacity="0.08" stroke-width="1"><line x1="73.6" y1="108" x2="73.6" y2="354"/><line x1="46" y1="326.5" x2="288" y2="326.5"/><line x1="101.0" y1="108" x2="101.0" y2="354"/><line x1="46" y1="299.1" x2="288" y2="299.1"/><line x1="128.3" y1="108" x2="128.3" y2="354"/><line x1="46" y1="271.8" x2="288" y2="271.8"/><line x1="155.6" y1="108" x2="155.6" y2="354"/><line x1="46" y1="244.5" x2="288" y2="244.5"/><line x1="183.0" y1="108" x2="183.0" y2="354"/><line x1="46" y1="217.1" x2="288" y2="217.1"/><line x1="210.3" y1="108" x2="210.3" y2="354"/><line x1="46" y1="189.8" x2="288" y2="189.8"/><line x1="237.6" y1="108" x2="237.6" y2="354"/><line x1="46" y1="162.5" x2="288" y2="162.5"/><line x1="264.9" y1="108" x2="264.9" y2="354"/><line x1="46" y1="135.2" x2="288" y2="135.2"/></g>
<path d="M46.5 108 V353.5 H288" stroke="#6e6e6e" stroke-width="1" fill="none"/>
<path d="M46 108.5 H288" stroke="#b8b8b8" stroke-width="1" fill="none"/>
<polygon points="130.6,190.2 217.0,261.8 90.7,329.9" fill="none" stroke="#f0a532" stroke-width="1.2" stroke-opacity="0.9"/>
<polygon points="86.4,129.3 205.5,246.0 81.5,336.2" fill="none" stroke="#000" stroke-width="1.1" stroke-opacity="0.85"/>
<g clip-path="url(#pc)" font-size="7.8" fill="#1c1c1c" stroke="#1c1c1c" stroke-width="0.22"><text x="100.6" y="351.3" text-anchor="middle">0.2</text><text x="48.7" y="301.3">0.2</text><text x="155.2" y="351.3" text-anchor="middle">0.4</text><text x="48.7" y="246.7">0.4</text><text x="209.9" y="351.3" text-anchor="middle">0.6</text><text x="48.7" y="192.0">0.6</text><text x="264.5" y="351.3" text-anchor="middle">0.8</text><text x="48.7" y="137.4">0.8</text><text x="48.9" y="351.3">0</text><text x="49.2" y="115.3">y</text><text x="285.3" y="351.3">x</text></g>
<text x="207" y="166.2" font-size="12.7" font-weight="bold" fill="#000">Monitor</text>
<text x="207" y="181.6" font-size="12.7" font-weight="bold" fill="#f0a636">sRGB</text>
<!-- bar chart -->
<rect x="310.2" y="108.5" width="245.2" height="244.8" fill="url(#bg)" stroke="#0c0c0c" stroke-width="1.1"/>
<g font-size="6.8" fill="#1e0c00" stroke="#1e0c00" stroke-width="0.15" style="font-family:'DejaVu Sans',sans-serif;word-spacing:0.6px;letter-spacing:0.08px"><line x1="311" x2="555" y1="303.4" y2="303.4" stroke="#000" stroke-opacity="0.07" stroke-width="1"/><text x="312" y="305.5">2 d E 94</text><line x1="311" x2="555" y1="254.8" y2="254.8" stroke="#000" stroke-opacity="0.07" stroke-width="1"/><text x="312" y="256.9">4 d E 94</text><line x1="311" x2="555" y1="206.2" y2="206.2" stroke="#000" stroke-opacity="0.07" stroke-width="1"/><text x="312" y="208.3">6 d E 94</text><line x1="311" x2="555" y1="157.6" y2="157.6" stroke="#000" stroke-opacity="0.07" stroke-width="1"/><text x="312" y="159.7">8 d E 94</text><text x="312.2" y="115">10 d E 94</text></g>
<g stroke="#050f00" stroke-width="1.25"><rect x="353.6" y="310.7" width="8.4" height="42.6" fill="#333333"/><rect x="365.2" y="327.7" width="8.4" height="25.6" fill="#4d4d4d"/><rect x="376.8" y="344.7" width="8.4" height="8.6" fill="#808080"/><rect x="388.4" y="338.6" width="8.4" height="14.7" fill="#c0c0c0"/><rect x="411.3" y="199.4" width="8.4" height="153.9" fill="#ff0000"/><rect x="422.7" y="140.6" width="8.4" height="212.7" fill="#00ff00"/><rect x="434.3" y="293.0" width="8.4" height="60.3" fill="#0000ff"/><rect x="445.9" y="320.4" width="8.4" height="32.9" fill="#00ffff"/><rect x="457.4" y="288.1" width="8.4" height="65.2" fill="#ff00ff"/><rect x="468.9" y="187.2" width="8.4" height="166.1" fill="#ffff00"/><rect x="480.5" y="310.7" width="8.4" height="42.6" fill="#b05a5a"/><rect x="492.0" y="278.4" width="8.4" height="74.9" fill="#5aaa5a"/><rect x="503.6" y="318.0" width="8.4" height="35.3" fill="#5a5aaa"/><rect x="515.2" y="330.6" width="8.4" height="22.7" fill="#5aaaaa"/><rect x="526.8" y="313.1" width="8.4" height="40.2" fill="#aa5aaa"/><rect x="538.3" y="278.4" width="8.4" height="74.9" fill="#aaaa5a"/></g>
<!-- radios -->
<circle cx="84.4" cy="96.9" r="4.25" fill="#fff" stroke="#0a5fb4" stroke-width="4.6"/>
<circle cx="135.9" cy="96.9" r="5.6" fill="#f7f7f7" stroke="#666" stroke-width="1.25"/>
<circle cx="215.9" cy="96.9" r="5.6" fill="#f7f7f7" stroke="#666" stroke-width="1.25"/>
</svg>
<div id="txt">
<div class="abs rl" style="left:92.8px;letter-spacing:-0.65px">sRGB</div>
<div class="abs rl" style="left:145px;letter-spacing:-0.38px">Adobe RGB</div>
<div class="abs rl" style="left:225px;letter-spacing:0.04px">ISOcoated</div>
<div class="abs" id="h1">Calibration Report</div>
<div class="abs tb " style="left:106.5px;top:364.1px">Target</div><div class="abs tb " style="left:167.5px;top:364.1px">Current</div><div class="abs tb " style="left:229px;top:364.1px">Deviation</div><div class="abs tb " style="left:44.5px;top:378.4px">Gamma</div><div class="abs tb " style="left:44.5px;top:392.8px">Kelvin</div><div class="abs tb " style="left:44.5px;top:407.4px">cd/m2</div><div class="abs tb " style="left:106.5px;top:378.4px">2.2</div><div class="abs tb " style="left:106.5px;top:392.8px">6500</div><div class="abs tb " style="left:106.5px;top:407.4px">120</div><div class="abs tb gr" style="left:167.5px;top:378.4px">2.2</div><div class="abs tb or" style="left:167.5px;top:392.8px">8521</div><div class="abs tb or" style="left:167.5px;top:407.4px">135</div><div class="abs tb gr" style="left:229px;top:378.4px">1%</div><div class="abs tb or" style="left:229px;top:392.8px">31%</div><div class="abs tb or" style="left:229px;top:407.4px">13%</div><div class="abs tb " style="left:310px;top:364.1px">Delta E Average</div><div class="abs tb " style="left:310px;top:378.4px">Delta E Maximum</div><div class="abs tb gr" style="left:418px;top:364.1px">2.5</div><div class="abs tb or" style="left:418px;top:378.4px">8.7</div>
<button type="button" class="btn" style="left:18px;width:68.5px;border-color:#4490d8;box-shadow:inset 0 0 0 0.5px #4490d8;">Main Menu</button>
<button type="button" class="btn" style="left:100px;width:68px;">Calibration</button>
<button type="button" class="btn" style="left:429.5px;width:68px;text-indent:-2.6px">Save</button>
<button type="button" class="btn" style="left:511px;width:68.3px;text-indent:-2.6px">Quit</button>
</div>
</body></html>
